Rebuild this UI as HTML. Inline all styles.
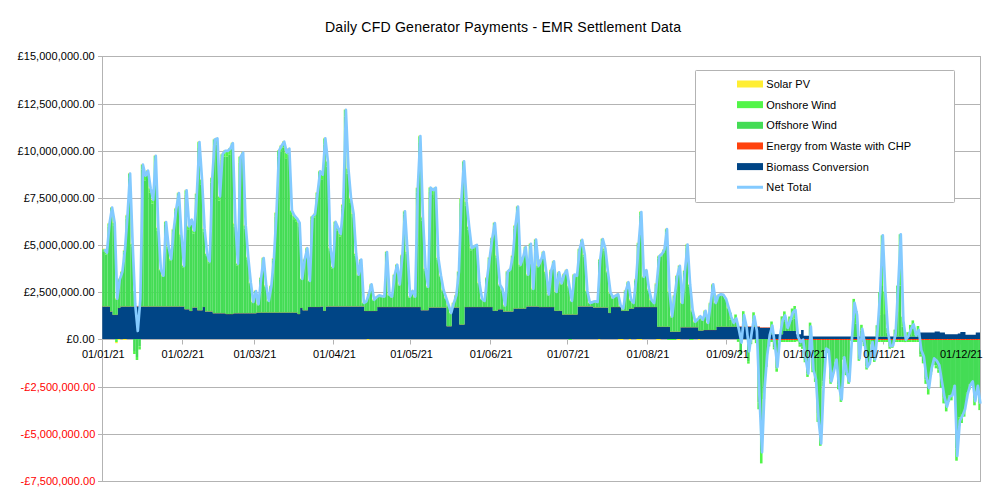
<!DOCTYPE html>
<html><head><meta charset="utf-8"><title>Daily CFD Generator Payments</title>
<style>html,body{margin:0;padding:0;background:#fff;}body{width:1005px;height:497px;overflow:hidden;position:relative;font-family:"Liberation Sans",sans-serif;}</style>
</head><body>
<svg width="1005" height="497" viewBox="0 0 1005 497" style="position:absolute;left:0;top:0">
<rect width="1005" height="497" fill="#fff"/>
<g stroke="#b3b3b3" stroke-width="1" fill="none">
<path d="M98 56.5H980.5"/>
<path d="M98 104.5H980.5"/>
<path d="M98 151.5H980.5"/>
<path d="M98 198.5H980.5"/>
<path d="M98 245.5H980.5"/>
<path d="M98 292.5H980.5"/>
<path d="M98 339.5H980.5"/>
<path d="M98 387.5H980.5"/>
<path d="M98 434.5H980.5"/>
<path d="M98 481.5H980.5"/>
<path d="M102.5 56V482"/>
<path d="M980.5 56V482"/>
</g>
<g stroke="#b3b3b3" stroke-width="1" fill="none">
<path d="M102.3 339.5H105.3"/>
<path d="M102.5 339.0V344.5"/>
<path d="M182.5 339.0V344.5"/>
<path d="M254.5 339.0V344.5"/>
<path d="M333.5 339.0V344.5"/>
<path d="M410.5 339.0V344.5"/>
<path d="M490.5 339.0V344.5"/>
<path d="M567.5 339.0V344.5"/>
<path d="M647.5 339.0V344.5"/>
<path d="M726.5 339.0V344.5"/>
<path d="M803.5 339.0V344.5"/>
<path d="M883.5 339.0V344.5"/>
<path d="M960.5 339.0V344.5"/>
</g>
<clipPath id="pc"><rect x="102" y="50" width="878" height="440"/></clipPath>
<path d="M102.30 339.0V306.50H104.87V306.50H107.44V306.50H110.01V311.40H112.58V314.80H115.14V314.80H117.71V308.00H120.28V306.50H122.85V306.50H125.42V306.50H127.99V306.50H130.56V306.50H133.13V306.50H135.70V306.50H138.27V306.50H140.83V306.50H143.40V306.50H145.97V306.50H148.54V306.50H151.11V306.50H153.68V306.50H156.25V306.50H158.82V306.50H161.39V306.50H163.96V306.50H166.52V306.50H169.09V306.50H171.66V306.50H174.23V306.50H176.80V306.50H179.37V306.50H181.94V306.50H184.51V309.20H187.08V309.20H189.65V311.00H192.22V307.40H194.78V307.40H197.35V310.30H199.92V310.30H202.49V307.00H205.06V311.40H207.63V311.40H210.20V311.40H212.77V313.20H215.34V313.20H217.91V313.20H220.47V313.20H223.04V313.20H225.61V314.10H228.18V314.10H230.75V314.10H233.32V313.20H235.89V313.20H238.46V313.20H241.03V313.20H243.59V313.20H246.16V313.20H248.73V313.20H251.30V313.20H253.87V313.20H256.44V312.60H259.01V312.60H261.58V312.60H264.15V312.60H266.72V312.60H269.29V312.60H271.85V312.60H274.42V312.60H276.99V312.60H279.56V312.60H282.13V312.60H284.70V312.60H287.27V312.60H289.84V312.60H292.41V312.60H294.98V312.60H297.54V314.10H300.11V308.00H302.68V310.30H305.25V310.30H307.82V307.00H310.39V307.00H312.96V307.00H315.53V307.00H318.10V307.00H320.67V306.40H323.23V310.80H325.80V306.40H328.37V306.40H330.94V306.40H333.51V306.40H336.08V306.40H338.65V306.40H341.22V306.40H343.79V306.40H346.36V306.40H348.92V306.40H351.49V306.40H354.06V306.40H356.63V306.40H359.20V306.40H361.77V306.40H364.34V311.00H366.91V311.00H369.48V311.00H372.05V311.00H374.61V311.00H377.18V307.10H379.75V307.10H382.32V307.10H384.89V307.10H387.46V307.10H390.03V307.10H392.60V307.10H395.17V307.10H397.74V307.10H400.30V307.10H402.87V307.10H405.44V307.10H408.01V307.10H410.58V307.10H413.15V307.10H415.72V307.10H418.29V307.10H420.86V310.20H423.43V310.20H425.99V310.20H428.56V307.50H431.13V307.50H433.70V307.50H436.27V307.50H438.84V307.50H441.41V307.50H443.98V307.50H446.55V326.20H449.12V326.20H451.68V307.50H454.25V307.50H456.82V307.50H459.39V324.60H461.96V324.60H464.53V307.10H467.10V307.10H469.67V307.10H472.24V307.10H474.81V307.10H477.37V307.10H479.94V307.10H482.51V307.10H485.08V307.10H487.65V307.10H490.22V307.10H492.79V310.80H495.36V310.80H497.93V309.30H500.50V309.30H503.06V311.50H505.63V311.50H508.20V311.50H510.77V311.50H513.34V308.60H515.91V308.60H518.48V308.60H521.05V308.60H523.62V308.60H526.18V306.40H528.75V306.40H531.32V306.40H533.89V306.40H536.46V306.40H539.03V307.10H541.60V307.10H544.17V307.10H546.74V307.10H549.31V307.10H551.87V307.10H554.44V310.80H557.01V310.80H559.58V310.80H562.15V314.60H564.72V314.60H567.29V314.60H569.86V314.60H572.43V314.60H575.00V314.60H577.56V306.40H580.13V306.40H582.70V306.40H585.27V306.40H587.84V306.40H590.41V306.40H592.98V307.50H595.55V307.50H598.12V307.50H600.69V307.50H603.25V307.50H605.82V307.50H608.39V313.00H610.96V307.10H613.53V307.10H616.10V307.10H618.67V307.10H621.24V310.80H623.81V310.80H626.38V310.80H628.94V308.60H631.51V308.60H634.08V307.10H636.65V307.10H639.22V307.10H641.79V307.10H644.36V307.10H646.93V307.10H649.50V307.10H652.07V307.10H654.63V307.10H657.20V326.80H659.77V326.80H662.34V326.80H664.91V326.80H667.48V326.80H670.05V331.70H672.62V331.70H675.19V331.70H677.76V331.70H680.32V327.30H682.89V327.30H685.46V327.30H688.03V327.30H690.60V327.30H693.17V327.30H695.74V327.30H698.31V330.60H700.88V330.60H703.45V330.00H706.01V330.00H708.58V330.00H711.15V330.00H713.72V330.00H716.29V326.80H718.86V326.80H721.43V326.80H724.00V326.80H726.57V326.80H729.14V326.80H731.70V326.80H734.27V326.80H736.84V326.80H739.41V326.80H741.98V326.80H744.55V326.80H747.12V326.80H749.69V326.80H752.26V326.80H754.83V326.80H757.39V326.80H759.96V327.70H762.53V327.70H765.10V327.70H767.67V327.70H770.24V334.30H772.81V334.30H775.38V334.30H777.95V334.30H780.52V334.30H783.08V331.00H785.65V331.00H788.22V331.00H790.79V331.00H793.36V331.00H795.93V334.30H798.50V334.30H801.07V329.90H803.64V335.80H806.21V335.80H808.77V335.80H811.34V336.60H813.91V336.60H816.48V336.60H819.05V336.60H821.62V336.60H824.19V336.60H826.76V336.60H829.33V336.60H831.90V336.60H834.46V336.60H837.03V336.60H839.60V336.60H842.17V336.60H844.74V336.60H847.31V336.60H849.88V336.60H852.45V336.60H855.02V336.60H857.59V336.60H860.15V336.60H862.72V336.60H865.29V336.60H867.86V336.60H870.43V336.60H873.00V336.60H875.57V336.60H878.14V336.60H880.71V336.60H883.28V336.60H885.84V336.60H888.41V336.60H890.98V336.60H893.55V336.60H896.12V336.60H898.69V336.60H901.26V336.60H903.83V336.60H906.40V336.60H908.97V336.60H911.53V336.60H914.10V336.60H916.67V336.60H919.24V332.50H921.81V332.50H924.38V332.50H926.95V332.50H929.52V332.50H932.09V332.50H934.66V331.40H937.22V331.40H939.79V332.50H942.36V332.50H944.93V334.20H947.50V334.20H950.07V334.20H952.64V334.20H955.21V334.20H957.78V333.60H960.35V331.90H962.91V331.90H965.48V334.80H968.05V334.80H970.62V334.80H973.19V334.80H975.76V332.50H978.33V332.50H980.90V339.0Z" fill="#004586" clip-path="url(#pc)"/>
<path d="M102.30 306.30H104.87M104.87 306.30H107.44M107.44 306.30H110.01M110.01 311.20H112.58M112.58 314.60H115.14M115.14 314.60H117.71M117.71 307.80H120.28M120.28 306.30H122.85M122.85 306.30H125.42M125.42 306.30H127.99M127.99 306.30H130.56M130.56 306.30H133.13M133.13 306.30H135.70M135.70 306.30H138.27M138.27 306.30H140.83M140.83 306.30H143.40M143.40 306.30H145.97M145.97 306.30H148.54M148.54 306.30H151.11M151.11 306.30H153.68M153.68 306.30H156.25M156.25 306.30H158.82M158.82 306.30H161.39M161.39 306.30H163.96M163.96 306.30H166.52M166.52 306.30H169.09M169.09 306.30H171.66M171.66 306.30H174.23M174.23 306.30H176.80M176.80 306.30H179.37M179.37 306.30H181.94M181.94 306.30H184.51M184.51 309.00H187.08M187.08 309.00H189.65M189.65 310.80H192.22M192.21 307.20H194.78M194.78 307.20H197.35M197.35 310.10H199.92M199.92 310.10H202.49M202.49 306.80H205.06M205.06 311.20H207.63M207.63 311.20H210.20M210.20 311.20H212.77M212.77 313.00H215.34M215.34 313.00H217.91M217.91 313.00H220.47M220.47 313.00H223.04M223.04 313.00H225.61M225.61 313.90H228.18M228.18 313.90H230.75M230.75 313.90H233.32M233.32 313.00H235.89M235.89 313.00H238.46M238.46 313.00H241.03M241.03 313.00H243.59M243.59 313.00H246.16M246.16 313.00H248.73M248.73 313.00H251.30M251.30 313.00H253.87M253.87 313.00H256.44M256.44 312.40H259.01M259.01 312.40H261.58M261.58 312.40H264.15M264.15 312.40H266.72M266.72 312.40H269.29M269.28 312.40H271.85M271.85 312.40H274.42M274.42 312.40H276.99M276.99 312.40H279.56M279.56 312.40H282.13M282.13 312.40H284.70M284.70 312.40H287.27M287.27 312.40H289.84M289.84 312.40H292.41M292.41 312.40H294.98M294.97 312.40H297.54M297.54 313.90H300.11M300.11 307.80H302.68M302.68 310.10H305.25M305.25 310.10H307.82M307.82 306.80H310.39M310.39 306.80H312.96M312.96 306.80H315.53M315.53 306.80H318.10M318.10 306.80H320.67M320.67 306.20H323.23M323.23 310.60H325.80M325.80 306.20H328.37M328.37 306.20H330.94M330.94 306.20H333.51M333.51 306.20H336.08M336.08 306.20H338.65M338.65 306.20H341.22M341.22 306.20H343.79M343.79 306.20H346.36M346.36 306.20H348.92M348.92 306.20H351.49M351.49 306.20H354.06M354.06 306.20H356.63M356.63 306.20H359.20M359.20 306.20H361.77M361.77 306.20H364.34M364.34 310.80H366.91M366.91 310.80H369.48M369.48 310.80H372.05M372.05 310.80H374.61M374.61 310.80H377.18M377.18 306.90H379.75M379.75 306.90H382.32M382.32 306.90H384.89M384.89 306.90H387.46M387.46 306.90H390.03M390.03 306.90H392.60M392.60 306.90H395.17M395.17 306.90H397.74M397.74 306.90H400.30M400.30 306.90H402.87M402.87 306.90H405.44M405.44 306.90H408.01M408.01 306.90H410.58M410.58 306.90H413.15M413.15 306.90H415.72M415.72 306.90H418.29M418.29 306.90H420.86M420.86 310.00H423.43M423.43 310.00H425.99M425.99 310.00H428.56M428.56 307.30H431.13M431.13 307.30H433.70M433.70 307.30H436.27M436.27 307.30H438.84M438.84 307.30H441.41M441.41 307.30H443.98M443.98 307.30H446.55M446.55 326.00H449.12M449.12 326.00H451.68M451.68 307.30H454.25M454.25 307.30H456.82M456.82 307.30H459.39M459.39 324.40H461.96M461.96 324.40H464.53M464.53 306.90H467.10M467.10 306.90H469.67M469.67 306.90H472.24M472.24 306.90H474.81M474.81 306.90H477.37M477.37 306.90H479.94M479.94 306.90H482.51M482.51 306.90H485.08M485.08 306.90H487.65M487.65 306.90H490.22M490.22 306.90H492.79M492.79 310.60H495.36M495.36 310.60H497.93M497.93 309.10H500.50M500.50 309.10H503.06M503.06 311.30H505.63M505.63 311.30H508.20M508.20 311.30H510.77M510.77 311.30H513.34M513.34 308.40H515.91M515.91 308.40H518.48M518.48 308.40H521.05M521.05 308.40H523.62M523.62 308.40H526.18M526.18 306.20H528.75M528.75 306.20H531.32M531.32 306.20H533.89M533.89 306.20H536.46M536.46 306.20H539.03M539.03 306.90H541.60M541.60 306.90H544.17M544.17 306.90H546.74M546.74 306.90H549.31M549.31 306.90H551.87M551.88 306.90H554.44M554.44 310.60H557.01M557.01 310.60H559.58M559.58 310.60H562.15M562.15 314.40H564.72M564.72 314.40H567.29M567.29 314.40H569.86M569.86 314.40H572.43M572.43 314.40H575.00M575.00 314.40H577.56M577.56 306.20H580.13M580.13 306.20H582.70M582.70 306.20H585.27M585.27 306.20H587.84M587.84 306.20H590.41M590.41 306.20H592.98M592.98 307.30H595.55M595.55 307.30H598.12M598.12 307.30H600.69M600.69 307.30H603.25M603.25 307.30H605.82M605.82 307.30H608.39M608.39 312.80H610.96M610.96 306.90H613.53M613.53 306.90H616.10M616.10 306.90H618.67M618.67 306.90H621.24M621.24 310.60H623.81M623.81 310.60H626.38M626.38 310.60H628.94M628.94 308.40H631.51M631.51 308.40H634.08M634.08 306.90H636.65M636.65 306.90H639.22M639.22 306.90H641.79M641.79 306.90H644.36M644.36 306.90H646.93M646.93 306.90H649.50M649.50 306.90H652.07M652.07 306.90H654.63M654.63 306.90H657.20M657.20 326.60H659.77M659.77 326.60H662.34M662.34 326.60H664.91M664.91 326.60H667.48M667.48 326.60H670.05M670.05 331.50H672.62M672.62 331.50H675.19M675.19 331.50H677.76M677.76 331.50H680.32M680.32 327.10H682.89M682.89 327.10H685.46M685.46 327.10H688.03M688.03 327.10H690.60M690.60 327.10H693.17M693.17 327.10H695.74M695.74 327.10H698.31M698.31 330.40H700.88M700.88 330.40H703.45M703.45 329.80H706.01M706.01 329.80H708.58M708.58 329.80H711.15M711.15 329.80H713.72M713.72 329.80H716.29M716.29 326.60H718.86M718.86 326.60H721.43M721.43 326.60H724.00M724.00 326.60H726.57M726.57 326.60H729.14M729.14 326.60H731.70M731.70 326.60H734.27M734.27 326.60H736.84M736.84 326.60H739.41M739.41 326.60H741.98M741.98 326.60H744.55M744.55 326.60H747.12M747.12 326.60H749.69M749.69 326.60H752.26M752.26 326.60H754.83M754.83 326.60H757.39M757.39 326.60H759.96M759.96 327.50H762.53M762.53 327.50H765.10M765.10 327.50H767.67M767.67 327.50H770.24" fill="none" stroke="#ff420e" stroke-width="0.6" opacity="0.8"/>
<g clip-path="url(#pc)">
<rect x="102.30" y="251.23" width="2.569" height="55.27" fill="#44dc55"/>
<rect x="102.30" y="249.23" width="2.569" height="2.00" fill="#52f548"/>
<rect x="102.30" y="248.63" width="2.569" height="0.60" fill="#ffee33"/>
<rect x="104.87" y="254.49" width="2.569" height="52.01" fill="#44dc55"/>
<rect x="104.87" y="252.60" width="2.569" height="1.89" fill="#52f548"/>
<rect x="104.87" y="252.00" width="2.569" height="0.60" fill="#ffee33"/>
<rect x="107.44" y="226.44" width="2.569" height="80.06" fill="#44dc55"/>
<rect x="107.44" y="223.54" width="2.569" height="2.90" fill="#52f548"/>
<rect x="107.44" y="222.94" width="2.569" height="0.60" fill="#ffee33"/>
<rect x="110.01" y="211.23" width="2.569" height="100.17" fill="#44dc55"/>
<rect x="110.01" y="207.60" width="2.569" height="3.63" fill="#52f548"/>
<rect x="110.01" y="207.00" width="2.569" height="0.60" fill="#ffee33"/>
<rect x="112.58" y="225.88" width="2.569" height="88.92" fill="#44dc55"/>
<rect x="112.58" y="222.65" width="2.569" height="3.23" fill="#52f548"/>
<rect x="112.58" y="222.05" width="2.569" height="0.60" fill="#ffee33"/>
<rect x="115.14" y="299.70" width="2.569" height="15.10" fill="#44dc55"/>
<rect x="115.14" y="298.70" width="2.569" height="1.00" fill="#52f548"/>
<rect x="115.14" y="298.10" width="2.569" height="0.60" fill="#ffee33"/>
<rect x="117.71" y="280.18" width="2.569" height="27.82" fill="#44dc55"/>
<rect x="117.71" y="279.18" width="2.569" height="1.01" fill="#52f548"/>
<rect x="117.71" y="278.58" width="2.569" height="0.60" fill="#ffee33"/>
<rect x="120.28" y="273.07" width="2.569" height="33.43" fill="#44dc55"/>
<rect x="120.28" y="271.85" width="2.569" height="1.21" fill="#52f548"/>
<rect x="120.28" y="271.25" width="2.569" height="0.60" fill="#ffee33"/>
<rect x="122.85" y="252.67" width="2.569" height="53.83" fill="#44dc55"/>
<rect x="122.85" y="250.72" width="2.569" height="1.95" fill="#52f548"/>
<rect x="122.85" y="250.12" width="2.569" height="0.60" fill="#ffee33"/>
<rect x="125.42" y="218.58" width="2.569" height="87.92" fill="#44dc55"/>
<rect x="125.42" y="215.39" width="2.569" height="3.19" fill="#52f548"/>
<rect x="125.42" y="214.79" width="2.569" height="0.60" fill="#ffee33"/>
<rect x="127.99" y="178.16" width="2.569" height="128.34" fill="#44dc55"/>
<rect x="127.99" y="173.50" width="2.569" height="4.66" fill="#52f548"/>
<rect x="127.99" y="172.90" width="2.569" height="0.60" fill="#ffee33"/>
<rect x="130.56" y="246.19" width="2.569" height="60.31" fill="#44dc55"/>
<rect x="130.56" y="244.00" width="2.569" height="2.19" fill="#52f548"/>
<rect x="130.56" y="243.40" width="2.569" height="0.60" fill="#ffee33"/>
<rect x="133.13" y="292.00" width="2.569" height="14.50" fill="#44dc55"/>
<rect x="133.13" y="291.00" width="2.569" height="1.00" fill="#52f548"/>
<rect x="133.13" y="339.00" width="2.569" height="12.00" fill="#44dc55"/>
<rect x="133.13" y="351.00" width="2.569" height="3.00" fill="#52f548"/>
<rect x="135.70" y="339.00" width="2.569" height="18.00" fill="#44dc55"/>
<rect x="135.70" y="357.00" width="2.569" height="3.00" fill="#52f548"/>
<rect x="138.27" y="339.00" width="2.569" height="7.50" fill="#44dc55"/>
<rect x="138.27" y="346.50" width="2.569" height="3.00" fill="#52f548"/>
<rect x="140.83" y="169.66" width="2.569" height="136.84" fill="#44dc55"/>
<rect x="140.83" y="164.70" width="2.569" height="4.96" fill="#52f548"/>
<rect x="140.83" y="164.10" width="2.569" height="0.60" fill="#ffee33"/>
<rect x="143.40" y="180.28" width="2.569" height="126.22" fill="#44dc55"/>
<rect x="143.40" y="175.70" width="2.569" height="4.58" fill="#52f548"/>
<rect x="143.40" y="175.10" width="2.569" height="0.60" fill="#ffee33"/>
<rect x="145.97" y="175.36" width="2.569" height="131.14" fill="#44dc55"/>
<rect x="145.97" y="170.60" width="2.569" height="4.76" fill="#52f548"/>
<rect x="145.97" y="170.00" width="2.569" height="0.60" fill="#ffee33"/>
<rect x="148.54" y="192.41" width="2.569" height="114.09" fill="#44dc55"/>
<rect x="148.54" y="188.27" width="2.569" height="4.14" fill="#52f548"/>
<rect x="148.54" y="187.67" width="2.569" height="0.60" fill="#ffee33"/>
<rect x="151.11" y="203.53" width="2.569" height="102.97" fill="#44dc55"/>
<rect x="151.11" y="199.80" width="2.569" height="3.73" fill="#52f548"/>
<rect x="151.11" y="199.20" width="2.569" height="0.60" fill="#ffee33"/>
<rect x="153.68" y="161.17" width="2.569" height="145.33" fill="#44dc55"/>
<rect x="153.68" y="155.90" width="2.569" height="5.27" fill="#52f548"/>
<rect x="153.68" y="155.30" width="2.569" height="0.60" fill="#ffee33"/>
<rect x="156.25" y="230.72" width="2.569" height="75.78" fill="#44dc55"/>
<rect x="156.25" y="227.97" width="2.569" height="2.75" fill="#52f548"/>
<rect x="156.25" y="227.37" width="2.569" height="0.60" fill="#ffee33"/>
<rect x="158.82" y="271.01" width="2.569" height="35.49" fill="#44dc55"/>
<rect x="158.82" y="269.72" width="2.569" height="1.29" fill="#52f548"/>
<rect x="158.82" y="269.12" width="2.569" height="0.60" fill="#ffee33"/>
<rect x="161.39" y="276.78" width="2.569" height="29.72" fill="#44dc55"/>
<rect x="161.39" y="275.70" width="2.569" height="1.08" fill="#52f548"/>
<rect x="161.39" y="275.10" width="2.569" height="0.60" fill="#ffee33"/>
<rect x="163.96" y="224.96" width="2.569" height="81.54" fill="#44dc55"/>
<rect x="163.96" y="222.00" width="2.569" height="2.96" fill="#52f548"/>
<rect x="163.96" y="221.40" width="2.569" height="0.60" fill="#ffee33"/>
<rect x="166.52" y="248.96" width="2.569" height="57.54" fill="#44dc55"/>
<rect x="166.52" y="246.87" width="2.569" height="2.09" fill="#52f548"/>
<rect x="166.52" y="246.27" width="2.569" height="0.60" fill="#ffee33"/>
<rect x="169.09" y="260.86" width="2.569" height="45.64" fill="#44dc55"/>
<rect x="169.09" y="259.20" width="2.569" height="1.66" fill="#52f548"/>
<rect x="169.09" y="258.60" width="2.569" height="0.60" fill="#ffee33"/>
<rect x="171.66" y="232.22" width="2.569" height="74.28" fill="#44dc55"/>
<rect x="171.66" y="229.53" width="2.569" height="2.69" fill="#52f548"/>
<rect x="171.66" y="228.93" width="2.569" height="0.60" fill="#ffee33"/>
<rect x="174.23" y="211.89" width="2.569" height="94.61" fill="#44dc55"/>
<rect x="174.23" y="208.46" width="2.569" height="3.43" fill="#52f548"/>
<rect x="174.23" y="207.86" width="2.569" height="0.60" fill="#ffee33"/>
<rect x="176.80" y="197.17" width="2.569" height="109.33" fill="#44dc55"/>
<rect x="176.80" y="193.20" width="2.569" height="3.97" fill="#52f548"/>
<rect x="176.80" y="192.60" width="2.569" height="0.60" fill="#ffee33"/>
<rect x="179.37" y="237.03" width="2.569" height="69.47" fill="#44dc55"/>
<rect x="179.37" y="234.51" width="2.569" height="2.52" fill="#52f548"/>
<rect x="179.37" y="233.91" width="2.569" height="0.60" fill="#ffee33"/>
<rect x="181.94" y="267.22" width="2.569" height="39.28" fill="#44dc55"/>
<rect x="181.94" y="265.80" width="2.569" height="1.42" fill="#52f548"/>
<rect x="181.94" y="265.20" width="2.569" height="0.60" fill="#ffee33"/>
<rect x="184.51" y="194.56" width="2.569" height="114.64" fill="#44dc55"/>
<rect x="184.51" y="190.40" width="2.569" height="4.16" fill="#52f548"/>
<rect x="184.51" y="189.80" width="2.569" height="0.60" fill="#ffee33"/>
<rect x="187.08" y="229.20" width="2.569" height="80.00" fill="#44dc55"/>
<rect x="187.08" y="226.30" width="2.569" height="2.90" fill="#52f548"/>
<rect x="187.08" y="225.70" width="2.569" height="0.60" fill="#ffee33"/>
<rect x="189.65" y="222.90" width="2.569" height="88.10" fill="#44dc55"/>
<rect x="189.65" y="219.70" width="2.569" height="3.20" fill="#52f548"/>
<rect x="189.65" y="219.10" width="2.569" height="0.60" fill="#ffee33"/>
<rect x="192.21" y="233.38" width="2.569" height="74.02" fill="#44dc55"/>
<rect x="192.21" y="230.70" width="2.569" height="2.68" fill="#52f548"/>
<rect x="192.21" y="230.10" width="2.569" height="0.60" fill="#ffee33"/>
<rect x="194.78" y="197.93" width="2.569" height="109.47" fill="#44dc55"/>
<rect x="194.78" y="193.96" width="2.569" height="3.97" fill="#52f548"/>
<rect x="194.78" y="193.36" width="2.569" height="0.60" fill="#ffee33"/>
<rect x="197.35" y="147.99" width="2.569" height="162.31" fill="#44dc55"/>
<rect x="197.35" y="142.10" width="2.569" height="5.89" fill="#52f548"/>
<rect x="197.35" y="141.50" width="2.569" height="0.60" fill="#ffee33"/>
<rect x="199.92" y="184.24" width="2.569" height="126.06" fill="#44dc55"/>
<rect x="199.92" y="179.67" width="2.569" height="4.57" fill="#52f548"/>
<rect x="199.92" y="179.07" width="2.569" height="0.60" fill="#ffee33"/>
<rect x="202.49" y="231.65" width="2.569" height="75.35" fill="#44dc55"/>
<rect x="202.49" y="228.91" width="2.569" height="2.73" fill="#52f548"/>
<rect x="202.49" y="228.31" width="2.569" height="0.60" fill="#ffee33"/>
<rect x="205.06" y="255.99" width="2.569" height="55.41" fill="#44dc55"/>
<rect x="205.06" y="253.98" width="2.569" height="2.01" fill="#52f548"/>
<rect x="205.06" y="253.38" width="2.569" height="0.60" fill="#ffee33"/>
<rect x="207.63" y="263.15" width="2.569" height="48.25" fill="#44dc55"/>
<rect x="207.63" y="261.40" width="2.569" height="1.75" fill="#52f548"/>
<rect x="207.63" y="260.80" width="2.569" height="0.60" fill="#ffee33"/>
<rect x="210.20" y="182.72" width="2.569" height="128.68" fill="#44dc55"/>
<rect x="210.20" y="178.05" width="2.569" height="4.67" fill="#52f548"/>
<rect x="210.20" y="177.45" width="2.569" height="0.60" fill="#ffee33"/>
<rect x="212.77" y="145.54" width="2.569" height="167.66" fill="#44dc55"/>
<rect x="212.77" y="139.46" width="2.569" height="6.08" fill="#52f548"/>
<rect x="212.77" y="138.86" width="2.569" height="0.60" fill="#ffee33"/>
<rect x="215.34" y="144.52" width="2.569" height="168.68" fill="#44dc55"/>
<rect x="215.34" y="138.40" width="2.569" height="6.12" fill="#52f548"/>
<rect x="215.34" y="137.80" width="2.569" height="0.60" fill="#ffee33"/>
<rect x="217.91" y="200.58" width="2.569" height="112.62" fill="#44dc55"/>
<rect x="217.91" y="196.50" width="2.569" height="4.08" fill="#52f548"/>
<rect x="217.91" y="195.90" width="2.569" height="0.60" fill="#ffee33"/>
<rect x="220.47" y="159.83" width="2.569" height="153.37" fill="#44dc55"/>
<rect x="220.47" y="154.27" width="2.569" height="5.56" fill="#52f548"/>
<rect x="220.47" y="153.67" width="2.569" height="0.60" fill="#ffee33"/>
<rect x="223.04" y="156.58" width="2.569" height="156.62" fill="#44dc55"/>
<rect x="223.04" y="150.90" width="2.569" height="5.68" fill="#52f548"/>
<rect x="223.04" y="150.30" width="2.569" height="0.60" fill="#ffee33"/>
<rect x="225.61" y="156.61" width="2.569" height="157.49" fill="#44dc55"/>
<rect x="225.61" y="150.90" width="2.569" height="5.71" fill="#52f548"/>
<rect x="225.61" y="150.30" width="2.569" height="0.60" fill="#ffee33"/>
<rect x="228.18" y="154.32" width="2.569" height="159.78" fill="#44dc55"/>
<rect x="228.18" y="148.52" width="2.569" height="5.80" fill="#52f548"/>
<rect x="228.18" y="147.92" width="2.569" height="0.60" fill="#ffee33"/>
<rect x="230.75" y="149.18" width="2.569" height="164.92" fill="#44dc55"/>
<rect x="230.75" y="143.20" width="2.569" height="5.98" fill="#52f548"/>
<rect x="230.75" y="142.60" width="2.569" height="0.60" fill="#ffee33"/>
<rect x="233.32" y="226.75" width="2.569" height="86.45" fill="#44dc55"/>
<rect x="233.32" y="223.61" width="2.569" height="3.14" fill="#52f548"/>
<rect x="233.32" y="223.01" width="2.569" height="0.60" fill="#ffee33"/>
<rect x="235.89" y="265.34" width="2.569" height="47.86" fill="#44dc55"/>
<rect x="235.89" y="263.60" width="2.569" height="1.74" fill="#52f548"/>
<rect x="235.89" y="263.00" width="2.569" height="0.60" fill="#ffee33"/>
<rect x="238.46" y="162.33" width="2.569" height="150.87" fill="#44dc55"/>
<rect x="238.46" y="156.86" width="2.569" height="5.47" fill="#52f548"/>
<rect x="238.46" y="156.26" width="2.569" height="0.60" fill="#ffee33"/>
<rect x="241.03" y="158.22" width="2.569" height="154.98" fill="#44dc55"/>
<rect x="241.03" y="152.60" width="2.569" height="5.62" fill="#52f548"/>
<rect x="241.03" y="152.00" width="2.569" height="0.60" fill="#ffee33"/>
<rect x="243.59" y="228.48" width="2.569" height="84.72" fill="#44dc55"/>
<rect x="243.59" y="225.41" width="2.569" height="3.07" fill="#52f548"/>
<rect x="243.59" y="224.81" width="2.569" height="0.60" fill="#ffee33"/>
<rect x="246.16" y="259.23" width="2.569" height="53.97" fill="#44dc55"/>
<rect x="246.16" y="257.28" width="2.569" height="1.96" fill="#52f548"/>
<rect x="246.16" y="256.68" width="2.569" height="0.60" fill="#ffee33"/>
<rect x="248.73" y="283.95" width="2.569" height="29.25" fill="#44dc55"/>
<rect x="248.73" y="282.89" width="2.569" height="1.06" fill="#52f548"/>
<rect x="248.73" y="282.29" width="2.569" height="0.60" fill="#ffee33"/>
<rect x="251.30" y="303.00" width="2.569" height="10.20" fill="#44dc55"/>
<rect x="251.30" y="302.00" width="2.569" height="1.00" fill="#52f548"/>
<rect x="251.30" y="301.40" width="2.569" height="0.60" fill="#ffee33"/>
<rect x="253.87" y="292.00" width="2.569" height="21.20" fill="#44dc55"/>
<rect x="253.87" y="291.00" width="2.569" height="1.00" fill="#52f548"/>
<rect x="253.87" y="290.40" width="2.569" height="0.60" fill="#ffee33"/>
<rect x="256.44" y="305.20" width="2.569" height="7.40" fill="#44dc55"/>
<rect x="256.44" y="304.20" width="2.569" height="1.00" fill="#52f548"/>
<rect x="256.44" y="303.60" width="2.569" height="0.60" fill="#ffee33"/>
<rect x="259.01" y="279.32" width="2.569" height="33.28" fill="#44dc55"/>
<rect x="259.01" y="278.12" width="2.569" height="1.21" fill="#52f548"/>
<rect x="259.01" y="277.52" width="2.569" height="0.60" fill="#ffee33"/>
<rect x="261.58" y="260.01" width="2.569" height="52.59" fill="#44dc55"/>
<rect x="261.58" y="258.10" width="2.569" height="1.91" fill="#52f548"/>
<rect x="261.58" y="257.50" width="2.569" height="0.60" fill="#ffee33"/>
<rect x="264.15" y="286.57" width="2.569" height="26.03" fill="#44dc55"/>
<rect x="264.15" y="285.57" width="2.569" height="1.00" fill="#52f548"/>
<rect x="264.15" y="284.97" width="2.569" height="0.60" fill="#ffee33"/>
<rect x="266.72" y="301.90" width="2.569" height="10.70" fill="#44dc55"/>
<rect x="266.72" y="300.90" width="2.569" height="1.00" fill="#52f548"/>
<rect x="266.72" y="300.30" width="2.569" height="0.60" fill="#ffee33"/>
<rect x="269.28" y="287.09" width="2.569" height="25.51" fill="#44dc55"/>
<rect x="269.28" y="286.09" width="2.569" height="1.00" fill="#52f548"/>
<rect x="269.28" y="285.49" width="2.569" height="0.60" fill="#ffee33"/>
<rect x="271.85" y="260.55" width="2.569" height="52.05" fill="#44dc55"/>
<rect x="271.85" y="258.66" width="2.569" height="1.89" fill="#52f548"/>
<rect x="271.85" y="258.06" width="2.569" height="0.60" fill="#ffee33"/>
<rect x="274.42" y="216.39" width="2.569" height="96.21" fill="#44dc55"/>
<rect x="274.42" y="212.90" width="2.569" height="3.49" fill="#52f548"/>
<rect x="274.42" y="212.30" width="2.569" height="0.60" fill="#ffee33"/>
<rect x="276.99" y="156.25" width="2.569" height="156.35" fill="#44dc55"/>
<rect x="276.99" y="150.58" width="2.569" height="5.67" fill="#52f548"/>
<rect x="276.99" y="149.98" width="2.569" height="0.60" fill="#ffee33"/>
<rect x="279.56" y="151.59" width="2.569" height="161.01" fill="#44dc55"/>
<rect x="279.56" y="145.75" width="2.569" height="5.84" fill="#52f548"/>
<rect x="279.56" y="145.15" width="2.569" height="0.60" fill="#ffee33"/>
<rect x="282.13" y="147.68" width="2.569" height="164.92" fill="#44dc55"/>
<rect x="282.13" y="141.70" width="2.569" height="5.98" fill="#52f548"/>
<rect x="282.13" y="141.10" width="2.569" height="0.60" fill="#ffee33"/>
<rect x="284.70" y="158.20" width="2.569" height="154.40" fill="#44dc55"/>
<rect x="284.70" y="152.60" width="2.569" height="5.60" fill="#52f548"/>
<rect x="284.70" y="152.00" width="2.569" height="0.60" fill="#ffee33"/>
<rect x="287.27" y="154.44" width="2.569" height="158.16" fill="#44dc55"/>
<rect x="287.27" y="148.70" width="2.569" height="5.74" fill="#52f548"/>
<rect x="287.27" y="148.10" width="2.569" height="0.60" fill="#ffee33"/>
<rect x="289.84" y="214.10" width="2.569" height="98.50" fill="#44dc55"/>
<rect x="289.84" y="210.53" width="2.569" height="3.57" fill="#52f548"/>
<rect x="289.84" y="209.93" width="2.569" height="0.60" fill="#ffee33"/>
<rect x="292.41" y="219.14" width="2.569" height="93.46" fill="#44dc55"/>
<rect x="292.41" y="215.75" width="2.569" height="3.39" fill="#52f548"/>
<rect x="292.41" y="215.15" width="2.569" height="0.60" fill="#ffee33"/>
<rect x="294.97" y="221.83" width="2.569" height="90.77" fill="#44dc55"/>
<rect x="294.97" y="218.54" width="2.569" height="3.29" fill="#52f548"/>
<rect x="294.97" y="217.94" width="2.569" height="0.60" fill="#ffee33"/>
<rect x="297.54" y="226.15" width="2.569" height="87.95" fill="#44dc55"/>
<rect x="297.54" y="222.96" width="2.569" height="3.19" fill="#52f548"/>
<rect x="297.54" y="222.36" width="2.569" height="0.60" fill="#ffee33"/>
<rect x="300.11" y="280.01" width="2.569" height="27.99" fill="#44dc55"/>
<rect x="300.11" y="279.00" width="2.569" height="1.01" fill="#52f548"/>
<rect x="300.11" y="278.40" width="2.569" height="0.60" fill="#ffee33"/>
<rect x="302.68" y="261.16" width="2.569" height="49.14" fill="#44dc55"/>
<rect x="302.68" y="259.38" width="2.569" height="1.78" fill="#52f548"/>
<rect x="302.68" y="258.78" width="2.569" height="0.60" fill="#ffee33"/>
<rect x="305.25" y="250.37" width="2.569" height="59.93" fill="#44dc55"/>
<rect x="305.25" y="248.20" width="2.569" height="2.17" fill="#52f548"/>
<rect x="305.25" y="247.60" width="2.569" height="0.60" fill="#ffee33"/>
<rect x="307.82" y="282.00" width="2.569" height="25.00" fill="#44dc55"/>
<rect x="307.82" y="281.00" width="2.569" height="1.00" fill="#52f548"/>
<rect x="307.82" y="280.40" width="2.569" height="0.60" fill="#ffee33"/>
<rect x="310.39" y="219.81" width="2.569" height="87.19" fill="#44dc55"/>
<rect x="310.39" y="216.65" width="2.569" height="3.16" fill="#52f548"/>
<rect x="310.39" y="216.05" width="2.569" height="0.60" fill="#ffee33"/>
<rect x="312.96" y="217.39" width="2.569" height="89.61" fill="#44dc55"/>
<rect x="312.96" y="214.14" width="2.569" height="3.25" fill="#52f548"/>
<rect x="312.96" y="213.54" width="2.569" height="0.60" fill="#ffee33"/>
<rect x="315.53" y="196.74" width="2.569" height="110.26" fill="#44dc55"/>
<rect x="315.53" y="192.74" width="2.569" height="4.00" fill="#52f548"/>
<rect x="315.53" y="192.14" width="2.569" height="0.60" fill="#ffee33"/>
<rect x="318.10" y="176.05" width="2.569" height="130.95" fill="#44dc55"/>
<rect x="318.10" y="171.30" width="2.569" height="4.75" fill="#52f548"/>
<rect x="318.10" y="170.70" width="2.569" height="0.60" fill="#ffee33"/>
<rect x="320.67" y="179.21" width="2.569" height="127.19" fill="#44dc55"/>
<rect x="320.67" y="174.60" width="2.569" height="4.61" fill="#52f548"/>
<rect x="320.67" y="174.00" width="2.569" height="0.60" fill="#ffee33"/>
<rect x="323.23" y="144.43" width="2.569" height="166.37" fill="#44dc55"/>
<rect x="323.23" y="138.40" width="2.569" height="6.03" fill="#52f548"/>
<rect x="323.23" y="137.80" width="2.569" height="0.60" fill="#ffee33"/>
<rect x="325.80" y="166.46" width="2.569" height="139.94" fill="#44dc55"/>
<rect x="325.80" y="161.39" width="2.569" height="5.08" fill="#52f548"/>
<rect x="325.80" y="160.79" width="2.569" height="0.60" fill="#ffee33"/>
<rect x="328.37" y="250.22" width="2.569" height="56.18" fill="#44dc55"/>
<rect x="328.37" y="248.18" width="2.569" height="2.04" fill="#52f548"/>
<rect x="328.37" y="247.58" width="2.569" height="0.60" fill="#ffee33"/>
<rect x="330.94" y="268.28" width="2.569" height="38.12" fill="#44dc55"/>
<rect x="330.94" y="266.90" width="2.569" height="1.38" fill="#52f548"/>
<rect x="330.94" y="266.30" width="2.569" height="0.60" fill="#ffee33"/>
<rect x="333.51" y="224.86" width="2.569" height="81.54" fill="#44dc55"/>
<rect x="333.51" y="221.90" width="2.569" height="2.96" fill="#52f548"/>
<rect x="333.51" y="221.30" width="2.569" height="0.60" fill="#ffee33"/>
<rect x="336.08" y="230.80" width="2.569" height="75.60" fill="#44dc55"/>
<rect x="336.08" y="228.06" width="2.569" height="2.74" fill="#52f548"/>
<rect x="336.08" y="227.46" width="2.569" height="0.60" fill="#ffee33"/>
<rect x="338.65" y="236.53" width="2.569" height="69.87" fill="#44dc55"/>
<rect x="338.65" y="234.00" width="2.569" height="2.53" fill="#52f548"/>
<rect x="338.65" y="233.40" width="2.569" height="0.60" fill="#ffee33"/>
<rect x="341.22" y="208.34" width="2.569" height="98.06" fill="#44dc55"/>
<rect x="341.22" y="204.78" width="2.569" height="3.56" fill="#52f548"/>
<rect x="341.22" y="204.18" width="2.569" height="0.60" fill="#ffee33"/>
<rect x="343.79" y="116.78" width="2.569" height="189.62" fill="#44dc55"/>
<rect x="343.79" y="109.90" width="2.569" height="6.88" fill="#52f548"/>
<rect x="343.79" y="109.30" width="2.569" height="0.60" fill="#ffee33"/>
<rect x="346.36" y="173.57" width="2.569" height="132.83" fill="#44dc55"/>
<rect x="346.36" y="168.75" width="2.569" height="4.82" fill="#52f548"/>
<rect x="346.36" y="168.15" width="2.569" height="0.60" fill="#ffee33"/>
<rect x="348.92" y="202.16" width="2.569" height="104.24" fill="#44dc55"/>
<rect x="348.92" y="198.38" width="2.569" height="3.78" fill="#52f548"/>
<rect x="348.92" y="197.78" width="2.569" height="0.60" fill="#ffee33"/>
<rect x="351.49" y="217.07" width="2.569" height="89.33" fill="#44dc55"/>
<rect x="351.49" y="213.83" width="2.569" height="3.24" fill="#52f548"/>
<rect x="351.49" y="213.23" width="2.569" height="0.60" fill="#ffee33"/>
<rect x="354.06" y="255.83" width="2.569" height="50.57" fill="#44dc55"/>
<rect x="354.06" y="254.00" width="2.569" height="1.83" fill="#52f548"/>
<rect x="354.06" y="253.40" width="2.569" height="0.60" fill="#ffee33"/>
<rect x="356.63" y="275.71" width="2.569" height="30.69" fill="#44dc55"/>
<rect x="356.63" y="274.60" width="2.569" height="1.11" fill="#52f548"/>
<rect x="356.63" y="274.00" width="2.569" height="0.60" fill="#ffee33"/>
<rect x="359.20" y="261.24" width="2.569" height="45.16" fill="#44dc55"/>
<rect x="359.20" y="259.60" width="2.569" height="1.64" fill="#52f548"/>
<rect x="359.20" y="259.00" width="2.569" height="0.60" fill="#ffee33"/>
<rect x="361.77" y="304.00" width="2.569" height="2.40" fill="#44dc55"/>
<rect x="361.77" y="303.00" width="2.569" height="1.00" fill="#52f548"/>
<rect x="361.77" y="302.40" width="2.569" height="0.60" fill="#ffee33"/>
<rect x="364.34" y="302.37" width="2.569" height="8.63" fill="#44dc55"/>
<rect x="364.34" y="301.37" width="2.569" height="1.00" fill="#52f548"/>
<rect x="364.34" y="300.77" width="2.569" height="0.60" fill="#ffee33"/>
<rect x="366.91" y="294.88" width="2.569" height="16.12" fill="#44dc55"/>
<rect x="366.91" y="293.88" width="2.569" height="1.00" fill="#52f548"/>
<rect x="366.91" y="293.28" width="2.569" height="0.60" fill="#ffee33"/>
<rect x="369.48" y="285.40" width="2.569" height="25.60" fill="#44dc55"/>
<rect x="369.48" y="284.40" width="2.569" height="1.00" fill="#52f548"/>
<rect x="369.48" y="283.80" width="2.569" height="0.60" fill="#ffee33"/>
<rect x="372.05" y="300.80" width="2.569" height="10.20" fill="#44dc55"/>
<rect x="372.05" y="299.80" width="2.569" height="1.00" fill="#52f548"/>
<rect x="372.05" y="299.20" width="2.569" height="0.60" fill="#ffee33"/>
<rect x="374.61" y="298.08" width="2.569" height="12.92" fill="#44dc55"/>
<rect x="374.61" y="297.08" width="2.569" height="1.00" fill="#52f548"/>
<rect x="374.61" y="296.48" width="2.569" height="0.60" fill="#ffee33"/>
<rect x="377.18" y="296.40" width="2.569" height="10.70" fill="#44dc55"/>
<rect x="377.18" y="295.40" width="2.569" height="1.00" fill="#52f548"/>
<rect x="377.18" y="294.80" width="2.569" height="0.60" fill="#ffee33"/>
<rect x="379.75" y="297.10" width="2.569" height="10.00" fill="#44dc55"/>
<rect x="379.75" y="296.10" width="2.569" height="1.00" fill="#52f548"/>
<rect x="379.75" y="295.50" width="2.569" height="0.60" fill="#ffee33"/>
<rect x="382.32" y="297.50" width="2.569" height="9.60" fill="#44dc55"/>
<rect x="382.32" y="296.50" width="2.569" height="1.00" fill="#52f548"/>
<rect x="382.32" y="295.90" width="2.569" height="0.60" fill="#ffee33"/>
<rect x="384.89" y="253.93" width="2.569" height="53.17" fill="#44dc55"/>
<rect x="384.89" y="252.00" width="2.569" height="1.93" fill="#52f548"/>
<rect x="384.89" y="251.40" width="2.569" height="0.60" fill="#ffee33"/>
<rect x="387.46" y="295.82" width="2.569" height="11.28" fill="#44dc55"/>
<rect x="387.46" y="294.82" width="2.569" height="1.00" fill="#52f548"/>
<rect x="387.46" y="294.22" width="2.569" height="0.60" fill="#ffee33"/>
<rect x="390.03" y="297.50" width="2.569" height="9.60" fill="#44dc55"/>
<rect x="390.03" y="296.50" width="2.569" height="1.00" fill="#52f548"/>
<rect x="390.03" y="295.90" width="2.569" height="0.60" fill="#ffee33"/>
<rect x="392.60" y="276.12" width="2.569" height="30.98" fill="#44dc55"/>
<rect x="392.60" y="274.99" width="2.569" height="1.12" fill="#52f548"/>
<rect x="392.60" y="274.39" width="2.569" height="0.60" fill="#ffee33"/>
<rect x="395.17" y="266.18" width="2.569" height="40.92" fill="#44dc55"/>
<rect x="395.17" y="264.70" width="2.569" height="1.48" fill="#52f548"/>
<rect x="395.17" y="264.10" width="2.569" height="0.60" fill="#ffee33"/>
<rect x="397.74" y="285.40" width="2.569" height="21.70" fill="#44dc55"/>
<rect x="397.74" y="284.40" width="2.569" height="1.00" fill="#52f548"/>
<rect x="397.74" y="283.80" width="2.569" height="0.60" fill="#ffee33"/>
<rect x="400.30" y="257.04" width="2.569" height="50.06" fill="#44dc55"/>
<rect x="400.30" y="255.22" width="2.569" height="1.82" fill="#52f548"/>
<rect x="400.30" y="254.62" width="2.569" height="0.60" fill="#ffee33"/>
<rect x="402.87" y="214.75" width="2.569" height="92.35" fill="#44dc55"/>
<rect x="402.87" y="211.40" width="2.569" height="3.35" fill="#52f548"/>
<rect x="402.87" y="210.80" width="2.569" height="0.60" fill="#ffee33"/>
<rect x="405.44" y="253.84" width="2.569" height="53.26" fill="#44dc55"/>
<rect x="405.44" y="251.91" width="2.569" height="1.93" fill="#52f548"/>
<rect x="405.44" y="251.31" width="2.569" height="0.60" fill="#ffee33"/>
<rect x="408.01" y="297.50" width="2.569" height="9.60" fill="#44dc55"/>
<rect x="408.01" y="296.50" width="2.569" height="1.00" fill="#52f548"/>
<rect x="408.01" y="295.90" width="2.569" height="0.60" fill="#ffee33"/>
<rect x="410.58" y="292.00" width="2.569" height="15.10" fill="#44dc55"/>
<rect x="410.58" y="291.00" width="2.569" height="1.00" fill="#52f548"/>
<rect x="410.58" y="290.40" width="2.569" height="0.60" fill="#ffee33"/>
<rect x="413.15" y="297.50" width="2.569" height="9.60" fill="#44dc55"/>
<rect x="413.15" y="296.50" width="2.569" height="1.00" fill="#52f548"/>
<rect x="413.15" y="295.90" width="2.569" height="0.60" fill="#ffee33"/>
<rect x="415.72" y="192.24" width="2.569" height="114.86" fill="#44dc55"/>
<rect x="415.72" y="188.07" width="2.569" height="4.17" fill="#52f548"/>
<rect x="415.72" y="187.47" width="2.569" height="0.60" fill="#ffee33"/>
<rect x="418.29" y="142.18" width="2.569" height="164.92" fill="#44dc55"/>
<rect x="418.29" y="136.20" width="2.569" height="5.98" fill="#52f548"/>
<rect x="418.29" y="135.60" width="2.569" height="0.60" fill="#ffee33"/>
<rect x="420.86" y="220.58" width="2.569" height="89.62" fill="#44dc55"/>
<rect x="420.86" y="217.33" width="2.569" height="3.25" fill="#52f548"/>
<rect x="420.86" y="216.73" width="2.569" height="0.60" fill="#ffee33"/>
<rect x="423.43" y="270.20" width="2.569" height="40.00" fill="#44dc55"/>
<rect x="423.43" y="268.75" width="2.569" height="1.45" fill="#52f548"/>
<rect x="423.43" y="268.15" width="2.569" height="0.60" fill="#ffee33"/>
<rect x="425.99" y="287.60" width="2.569" height="22.60" fill="#44dc55"/>
<rect x="425.99" y="286.60" width="2.569" height="1.00" fill="#52f548"/>
<rect x="425.99" y="286.00" width="2.569" height="0.60" fill="#ffee33"/>
<rect x="428.56" y="191.89" width="2.569" height="115.61" fill="#44dc55"/>
<rect x="428.56" y="187.70" width="2.569" height="4.19" fill="#52f548"/>
<rect x="428.56" y="187.10" width="2.569" height="0.60" fill="#ffee33"/>
<rect x="431.13" y="194.11" width="2.569" height="113.39" fill="#44dc55"/>
<rect x="431.13" y="190.00" width="2.569" height="4.11" fill="#52f548"/>
<rect x="431.13" y="189.40" width="2.569" height="0.60" fill="#ffee33"/>
<rect x="433.70" y="191.89" width="2.569" height="115.61" fill="#44dc55"/>
<rect x="433.70" y="187.70" width="2.569" height="4.19" fill="#52f548"/>
<rect x="433.70" y="187.10" width="2.569" height="0.60" fill="#ffee33"/>
<rect x="436.27" y="259.80" width="2.569" height="47.70" fill="#44dc55"/>
<rect x="436.27" y="258.07" width="2.569" height="1.73" fill="#52f548"/>
<rect x="436.27" y="257.47" width="2.569" height="0.60" fill="#ffee33"/>
<rect x="438.84" y="276.66" width="2.569" height="30.84" fill="#44dc55"/>
<rect x="438.84" y="275.55" width="2.569" height="1.12" fill="#52f548"/>
<rect x="438.84" y="274.95" width="2.569" height="0.60" fill="#ffee33"/>
<rect x="441.41" y="290.78" width="2.569" height="16.72" fill="#44dc55"/>
<rect x="441.41" y="289.78" width="2.569" height="1.00" fill="#52f548"/>
<rect x="441.41" y="289.18" width="2.569" height="0.60" fill="#ffee33"/>
<rect x="443.98" y="298.48" width="2.569" height="9.02" fill="#44dc55"/>
<rect x="443.98" y="297.48" width="2.569" height="1.00" fill="#52f548"/>
<rect x="443.98" y="296.88" width="2.569" height="0.60" fill="#ffee33"/>
<rect x="446.55" y="306.19" width="2.569" height="20.01" fill="#44dc55"/>
<rect x="446.55" y="305.19" width="2.569" height="1.00" fill="#52f548"/>
<rect x="446.55" y="304.59" width="2.569" height="0.60" fill="#ffee33"/>
<rect x="449.12" y="314.00" width="2.569" height="12.20" fill="#44dc55"/>
<rect x="449.12" y="313.00" width="2.569" height="1.00" fill="#52f548"/>
<rect x="449.12" y="312.40" width="2.569" height="0.60" fill="#ffee33"/>
<rect x="451.68" y="304.25" width="2.569" height="3.25" fill="#44dc55"/>
<rect x="451.68" y="303.25" width="2.569" height="1.00" fill="#52f548"/>
<rect x="451.68" y="302.65" width="2.569" height="0.60" fill="#ffee33"/>
<rect x="454.25" y="296.40" width="2.569" height="11.10" fill="#44dc55"/>
<rect x="454.25" y="295.40" width="2.569" height="1.00" fill="#52f548"/>
<rect x="454.25" y="294.80" width="2.569" height="0.60" fill="#ffee33"/>
<rect x="456.82" y="273.05" width="2.569" height="34.45" fill="#44dc55"/>
<rect x="456.82" y="271.80" width="2.569" height="1.25" fill="#52f548"/>
<rect x="456.82" y="271.20" width="2.569" height="0.60" fill="#ffee33"/>
<rect x="459.39" y="203.07" width="2.569" height="121.53" fill="#44dc55"/>
<rect x="459.39" y="198.66" width="2.569" height="4.41" fill="#52f548"/>
<rect x="459.39" y="198.06" width="2.569" height="0.60" fill="#ffee33"/>
<rect x="461.96" y="167.11" width="2.569" height="157.49" fill="#44dc55"/>
<rect x="461.96" y="161.40" width="2.569" height="5.71" fill="#52f548"/>
<rect x="461.96" y="160.80" width="2.569" height="0.60" fill="#ffee33"/>
<rect x="464.53" y="205.36" width="2.569" height="101.74" fill="#44dc55"/>
<rect x="464.53" y="201.67" width="2.569" height="3.69" fill="#52f548"/>
<rect x="464.53" y="201.07" width="2.569" height="0.60" fill="#ffee33"/>
<rect x="467.10" y="229.62" width="2.569" height="77.48" fill="#44dc55"/>
<rect x="467.10" y="226.81" width="2.569" height="2.81" fill="#52f548"/>
<rect x="467.10" y="226.21" width="2.569" height="0.60" fill="#ffee33"/>
<rect x="469.67" y="250.26" width="2.569" height="56.84" fill="#44dc55"/>
<rect x="469.67" y="248.20" width="2.569" height="2.06" fill="#52f548"/>
<rect x="469.67" y="247.60" width="2.569" height="0.60" fill="#ffee33"/>
<rect x="472.24" y="248.32" width="2.569" height="58.78" fill="#44dc55"/>
<rect x="472.24" y="246.19" width="2.569" height="2.13" fill="#52f548"/>
<rect x="472.24" y="245.59" width="2.569" height="0.60" fill="#ffee33"/>
<rect x="474.81" y="247.17" width="2.569" height="59.93" fill="#44dc55"/>
<rect x="474.81" y="245.00" width="2.569" height="2.17" fill="#52f548"/>
<rect x="474.81" y="244.40" width="2.569" height="0.60" fill="#ffee33"/>
<rect x="477.37" y="284.06" width="2.569" height="23.04" fill="#44dc55"/>
<rect x="477.37" y="283.06" width="2.569" height="1.00" fill="#52f548"/>
<rect x="477.37" y="282.46" width="2.569" height="0.60" fill="#ffee33"/>
<rect x="479.94" y="300.02" width="2.569" height="7.08" fill="#44dc55"/>
<rect x="479.94" y="299.02" width="2.569" height="1.00" fill="#52f548"/>
<rect x="479.94" y="298.42" width="2.569" height="0.60" fill="#ffee33"/>
<rect x="482.51" y="301.90" width="2.569" height="5.20" fill="#44dc55"/>
<rect x="482.51" y="300.90" width="2.569" height="1.00" fill="#52f548"/>
<rect x="482.51" y="300.30" width="2.569" height="0.60" fill="#ffee33"/>
<rect x="485.08" y="278.90" width="2.569" height="28.20" fill="#44dc55"/>
<rect x="485.08" y="277.88" width="2.569" height="1.02" fill="#52f548"/>
<rect x="485.08" y="277.28" width="2.569" height="0.60" fill="#ffee33"/>
<rect x="487.65" y="259.43" width="2.569" height="47.67" fill="#44dc55"/>
<rect x="487.65" y="257.70" width="2.569" height="1.73" fill="#52f548"/>
<rect x="487.65" y="257.10" width="2.569" height="0.60" fill="#ffee33"/>
<rect x="490.22" y="240.59" width="2.569" height="66.51" fill="#44dc55"/>
<rect x="490.22" y="238.17" width="2.569" height="2.41" fill="#52f548"/>
<rect x="490.22" y="237.57" width="2.569" height="0.60" fill="#ffee33"/>
<rect x="492.79" y="226.07" width="2.569" height="84.73" fill="#44dc55"/>
<rect x="492.79" y="223.00" width="2.569" height="3.07" fill="#52f548"/>
<rect x="492.79" y="222.40" width="2.569" height="0.60" fill="#ffee33"/>
<rect x="495.36" y="257.39" width="2.569" height="53.41" fill="#44dc55"/>
<rect x="495.36" y="255.45" width="2.569" height="1.94" fill="#52f548"/>
<rect x="495.36" y="254.85" width="2.569" height="0.60" fill="#ffee33"/>
<rect x="497.93" y="285.74" width="2.569" height="23.56" fill="#44dc55"/>
<rect x="497.93" y="284.74" width="2.569" height="1.00" fill="#52f548"/>
<rect x="497.93" y="284.14" width="2.569" height="0.60" fill="#ffee33"/>
<rect x="500.50" y="290.27" width="2.569" height="19.03" fill="#44dc55"/>
<rect x="500.50" y="289.27" width="2.569" height="1.00" fill="#52f548"/>
<rect x="500.50" y="288.67" width="2.569" height="0.60" fill="#ffee33"/>
<rect x="503.06" y="306.30" width="2.569" height="5.20" fill="#44dc55"/>
<rect x="503.06" y="305.30" width="2.569" height="1.00" fill="#52f548"/>
<rect x="503.06" y="304.70" width="2.569" height="0.60" fill="#ffee33"/>
<rect x="505.63" y="273.00" width="2.569" height="38.50" fill="#44dc55"/>
<rect x="505.63" y="271.61" width="2.569" height="1.40" fill="#52f548"/>
<rect x="505.63" y="271.01" width="2.569" height="0.60" fill="#ffee33"/>
<rect x="508.20" y="270.87" width="2.569" height="40.63" fill="#44dc55"/>
<rect x="508.20" y="269.39" width="2.569" height="1.47" fill="#52f548"/>
<rect x="508.20" y="268.79" width="2.569" height="0.60" fill="#ffee33"/>
<rect x="510.77" y="257.96" width="2.569" height="53.54" fill="#44dc55"/>
<rect x="510.77" y="256.02" width="2.569" height="1.94" fill="#52f548"/>
<rect x="510.77" y="255.42" width="2.569" height="0.60" fill="#ffee33"/>
<rect x="513.34" y="228.71" width="2.569" height="79.89" fill="#44dc55"/>
<rect x="513.34" y="225.82" width="2.569" height="2.90" fill="#52f548"/>
<rect x="513.34" y="225.22" width="2.569" height="0.60" fill="#ffee33"/>
<rect x="515.91" y="210.07" width="2.569" height="98.53" fill="#44dc55"/>
<rect x="515.91" y="206.50" width="2.569" height="3.57" fill="#52f548"/>
<rect x="515.91" y="205.90" width="2.569" height="0.60" fill="#ffee33"/>
<rect x="518.48" y="266.24" width="2.569" height="42.36" fill="#44dc55"/>
<rect x="518.48" y="264.70" width="2.569" height="1.54" fill="#52f548"/>
<rect x="518.48" y="264.10" width="2.569" height="0.60" fill="#ffee33"/>
<rect x="521.05" y="259.17" width="2.569" height="49.43" fill="#44dc55"/>
<rect x="521.05" y="257.38" width="2.569" height="1.79" fill="#52f548"/>
<rect x="521.05" y="256.78" width="2.569" height="0.60" fill="#ffee33"/>
<rect x="523.62" y="249.25" width="2.569" height="59.35" fill="#44dc55"/>
<rect x="523.62" y="247.10" width="2.569" height="2.15" fill="#52f548"/>
<rect x="523.62" y="246.50" width="2.569" height="0.60" fill="#ffee33"/>
<rect x="526.18" y="275.71" width="2.569" height="30.69" fill="#44dc55"/>
<rect x="526.18" y="274.60" width="2.569" height="1.11" fill="#52f548"/>
<rect x="526.18" y="274.00" width="2.569" height="0.60" fill="#ffee33"/>
<rect x="528.75" y="246.09" width="2.569" height="60.31" fill="#44dc55"/>
<rect x="528.75" y="243.90" width="2.569" height="2.19" fill="#52f548"/>
<rect x="528.75" y="243.30" width="2.569" height="0.60" fill="#ffee33"/>
<rect x="531.32" y="289.80" width="2.569" height="16.60" fill="#44dc55"/>
<rect x="531.32" y="288.80" width="2.569" height="1.00" fill="#52f548"/>
<rect x="531.32" y="288.20" width="2.569" height="0.60" fill="#ffee33"/>
<rect x="533.89" y="241.84" width="2.569" height="64.56" fill="#44dc55"/>
<rect x="533.89" y="239.50" width="2.569" height="2.34" fill="#52f548"/>
<rect x="533.89" y="238.90" width="2.569" height="0.60" fill="#ffee33"/>
<rect x="536.46" y="267.22" width="2.569" height="39.18" fill="#44dc55"/>
<rect x="536.46" y="265.80" width="2.569" height="1.42" fill="#52f548"/>
<rect x="536.46" y="265.20" width="2.569" height="0.60" fill="#ffee33"/>
<rect x="539.03" y="261.54" width="2.569" height="45.56" fill="#44dc55"/>
<rect x="539.03" y="259.88" width="2.569" height="1.65" fill="#52f548"/>
<rect x="539.03" y="259.28" width="2.569" height="0.60" fill="#ffee33"/>
<rect x="541.60" y="253.93" width="2.569" height="53.17" fill="#44dc55"/>
<rect x="541.60" y="252.00" width="2.569" height="1.93" fill="#52f548"/>
<rect x="541.60" y="251.40" width="2.569" height="0.60" fill="#ffee33"/>
<rect x="544.17" y="273.08" width="2.569" height="34.02" fill="#44dc55"/>
<rect x="544.17" y="271.85" width="2.569" height="1.23" fill="#52f548"/>
<rect x="544.17" y="271.25" width="2.569" height="0.60" fill="#ffee33"/>
<rect x="546.74" y="295.30" width="2.569" height="11.80" fill="#44dc55"/>
<rect x="546.74" y="294.30" width="2.569" height="1.00" fill="#52f548"/>
<rect x="546.74" y="293.70" width="2.569" height="0.60" fill="#ffee33"/>
<rect x="549.31" y="271.54" width="2.569" height="35.56" fill="#44dc55"/>
<rect x="549.31" y="270.25" width="2.569" height="1.29" fill="#52f548"/>
<rect x="549.31" y="269.65" width="2.569" height="0.60" fill="#ffee33"/>
<rect x="551.88" y="263.00" width="2.569" height="44.10" fill="#44dc55"/>
<rect x="551.88" y="261.40" width="2.569" height="1.60" fill="#52f548"/>
<rect x="551.88" y="260.80" width="2.569" height="0.60" fill="#ffee33"/>
<rect x="554.44" y="293.00" width="2.569" height="17.80" fill="#44dc55"/>
<rect x="554.44" y="292.00" width="2.569" height="1.00" fill="#52f548"/>
<rect x="554.44" y="291.40" width="2.569" height="0.60" fill="#ffee33"/>
<rect x="557.01" y="273.74" width="2.569" height="37.06" fill="#44dc55"/>
<rect x="557.01" y="272.40" width="2.569" height="1.34" fill="#52f548"/>
<rect x="557.01" y="271.80" width="2.569" height="0.60" fill="#ffee33"/>
<rect x="559.58" y="284.30" width="2.569" height="26.50" fill="#44dc55"/>
<rect x="559.58" y="283.30" width="2.569" height="1.00" fill="#52f548"/>
<rect x="559.58" y="282.70" width="2.569" height="0.60" fill="#ffee33"/>
<rect x="562.15" y="275.74" width="2.569" height="38.86" fill="#44dc55"/>
<rect x="562.15" y="274.33" width="2.569" height="1.41" fill="#52f548"/>
<rect x="562.15" y="273.73" width="2.569" height="0.60" fill="#ffee33"/>
<rect x="564.72" y="271.75" width="2.569" height="42.85" fill="#44dc55"/>
<rect x="564.72" y="270.20" width="2.569" height="1.55" fill="#52f548"/>
<rect x="564.72" y="269.60" width="2.569" height="0.60" fill="#ffee33"/>
<rect x="567.29" y="287.17" width="2.569" height="27.43" fill="#44dc55"/>
<rect x="567.29" y="286.17" width="2.569" height="1.00" fill="#52f548"/>
<rect x="567.29" y="285.57" width="2.569" height="0.60" fill="#ffee33"/>
<rect x="569.86" y="301.90" width="2.569" height="12.70" fill="#44dc55"/>
<rect x="569.86" y="300.90" width="2.569" height="1.00" fill="#52f548"/>
<rect x="569.86" y="300.30" width="2.569" height="0.60" fill="#ffee33"/>
<rect x="572.43" y="276.00" width="2.569" height="38.60" fill="#44dc55"/>
<rect x="572.43" y="274.60" width="2.569" height="1.40" fill="#52f548"/>
<rect x="572.43" y="274.00" width="2.569" height="0.60" fill="#ffee33"/>
<rect x="575.00" y="277.06" width="2.569" height="37.54" fill="#44dc55"/>
<rect x="575.00" y="275.70" width="2.569" height="1.36" fill="#52f548"/>
<rect x="575.00" y="275.10" width="2.569" height="0.60" fill="#ffee33"/>
<rect x="577.56" y="251.16" width="2.569" height="55.24" fill="#44dc55"/>
<rect x="577.56" y="249.16" width="2.569" height="2.00" fill="#52f548"/>
<rect x="577.56" y="248.56" width="2.569" height="0.60" fill="#ffee33"/>
<rect x="580.13" y="242.23" width="2.569" height="64.17" fill="#44dc55"/>
<rect x="580.13" y="239.90" width="2.569" height="2.33" fill="#52f548"/>
<rect x="580.13" y="239.30" width="2.569" height="0.60" fill="#ffee33"/>
<rect x="582.70" y="256.57" width="2.569" height="49.83" fill="#44dc55"/>
<rect x="582.70" y="254.77" width="2.569" height="1.81" fill="#52f548"/>
<rect x="582.70" y="254.17" width="2.569" height="0.60" fill="#ffee33"/>
<rect x="585.27" y="291.92" width="2.569" height="14.48" fill="#44dc55"/>
<rect x="585.27" y="290.92" width="2.569" height="1.00" fill="#52f548"/>
<rect x="585.27" y="290.32" width="2.569" height="0.60" fill="#ffee33"/>
<rect x="587.84" y="304.00" width="2.569" height="2.40" fill="#44dc55"/>
<rect x="587.84" y="303.00" width="2.569" height="1.00" fill="#52f548"/>
<rect x="587.84" y="302.40" width="2.569" height="0.60" fill="#ffee33"/>
<rect x="590.41" y="303.11" width="2.569" height="3.29" fill="#44dc55"/>
<rect x="590.41" y="302.11" width="2.569" height="1.00" fill="#52f548"/>
<rect x="590.41" y="301.51" width="2.569" height="0.60" fill="#ffee33"/>
<rect x="592.98" y="302.30" width="2.569" height="5.20" fill="#44dc55"/>
<rect x="592.98" y="301.30" width="2.569" height="1.00" fill="#52f548"/>
<rect x="592.98" y="300.70" width="2.569" height="0.60" fill="#ffee33"/>
<rect x="595.55" y="303.00" width="2.569" height="4.50" fill="#44dc55"/>
<rect x="595.55" y="302.00" width="2.569" height="1.00" fill="#52f548"/>
<rect x="595.55" y="301.40" width="2.569" height="0.60" fill="#ffee33"/>
<rect x="598.12" y="261.21" width="2.569" height="46.29" fill="#44dc55"/>
<rect x="598.12" y="259.53" width="2.569" height="1.68" fill="#52f548"/>
<rect x="598.12" y="258.93" width="2.569" height="0.60" fill="#ffee33"/>
<rect x="600.69" y="241.40" width="2.569" height="66.10" fill="#44dc55"/>
<rect x="600.69" y="239.00" width="2.569" height="2.40" fill="#52f548"/>
<rect x="600.69" y="238.40" width="2.569" height="0.60" fill="#ffee33"/>
<rect x="603.25" y="250.60" width="2.569" height="56.90" fill="#44dc55"/>
<rect x="603.25" y="248.54" width="2.569" height="2.06" fill="#52f548"/>
<rect x="603.25" y="247.94" width="2.569" height="0.60" fill="#ffee33"/>
<rect x="605.82" y="272.84" width="2.569" height="34.66" fill="#44dc55"/>
<rect x="605.82" y="271.58" width="2.569" height="1.26" fill="#52f548"/>
<rect x="605.82" y="270.98" width="2.569" height="0.60" fill="#ffee33"/>
<rect x="608.39" y="293.47" width="2.569" height="19.53" fill="#44dc55"/>
<rect x="608.39" y="292.47" width="2.569" height="1.00" fill="#52f548"/>
<rect x="608.39" y="291.87" width="2.569" height="0.60" fill="#ffee33"/>
<rect x="610.96" y="298.60" width="2.569" height="8.50" fill="#44dc55"/>
<rect x="610.96" y="297.60" width="2.569" height="1.00" fill="#52f548"/>
<rect x="610.96" y="297.00" width="2.569" height="0.60" fill="#ffee33"/>
<rect x="613.53" y="296.71" width="2.569" height="10.39" fill="#44dc55"/>
<rect x="613.53" y="295.71" width="2.569" height="1.00" fill="#52f548"/>
<rect x="613.53" y="295.11" width="2.569" height="0.60" fill="#ffee33"/>
<rect x="616.10" y="295.30" width="2.569" height="11.80" fill="#44dc55"/>
<rect x="616.10" y="294.30" width="2.569" height="1.00" fill="#52f548"/>
<rect x="616.10" y="293.70" width="2.569" height="0.60" fill="#ffee33"/>
<rect x="618.67" y="306.71" width="2.569" height="0.39" fill="#44dc55"/>
<rect x="618.67" y="305.71" width="2.569" height="1.00" fill="#52f548"/>
<rect x="618.67" y="305.11" width="2.569" height="0.60" fill="#ffee33"/>
<rect x="621.24" y="309.60" width="2.569" height="1.20" fill="#44dc55"/>
<rect x="621.24" y="308.60" width="2.569" height="1.00" fill="#52f548"/>
<rect x="621.24" y="308.00" width="2.569" height="0.60" fill="#ffee33"/>
<rect x="623.81" y="291.62" width="2.569" height="19.18" fill="#44dc55"/>
<rect x="623.81" y="290.62" width="2.569" height="1.00" fill="#52f548"/>
<rect x="623.81" y="290.02" width="2.569" height="0.60" fill="#ffee33"/>
<rect x="626.38" y="283.20" width="2.569" height="27.60" fill="#44dc55"/>
<rect x="626.38" y="282.20" width="2.569" height="1.00" fill="#52f548"/>
<rect x="626.38" y="281.60" width="2.569" height="0.60" fill="#ffee33"/>
<rect x="628.94" y="300.67" width="2.569" height="7.93" fill="#44dc55"/>
<rect x="628.94" y="299.67" width="2.569" height="1.00" fill="#52f548"/>
<rect x="628.94" y="299.07" width="2.569" height="0.60" fill="#ffee33"/>
<rect x="631.51" y="304.00" width="2.569" height="4.60" fill="#44dc55"/>
<rect x="631.51" y="303.00" width="2.569" height="1.00" fill="#52f548"/>
<rect x="631.51" y="302.40" width="2.569" height="0.60" fill="#ffee33"/>
<rect x="634.08" y="280.44" width="2.569" height="26.66" fill="#44dc55"/>
<rect x="634.08" y="279.44" width="2.569" height="1.00" fill="#52f548"/>
<rect x="634.08" y="278.84" width="2.569" height="0.60" fill="#ffee33"/>
<rect x="636.65" y="245.45" width="2.569" height="61.65" fill="#44dc55"/>
<rect x="636.65" y="243.22" width="2.569" height="2.24" fill="#52f548"/>
<rect x="636.65" y="242.62" width="2.569" height="0.60" fill="#ffee33"/>
<rect x="639.22" y="215.33" width="2.569" height="91.77" fill="#44dc55"/>
<rect x="639.22" y="212.00" width="2.569" height="3.33" fill="#52f548"/>
<rect x="639.22" y="211.40" width="2.569" height="0.60" fill="#ffee33"/>
<rect x="641.79" y="277.86" width="2.569" height="29.24" fill="#44dc55"/>
<rect x="641.79" y="276.80" width="2.569" height="1.06" fill="#52f548"/>
<rect x="641.79" y="276.20" width="2.569" height="0.60" fill="#ffee33"/>
<rect x="644.36" y="271.49" width="2.569" height="35.61" fill="#44dc55"/>
<rect x="644.36" y="270.20" width="2.569" height="1.29" fill="#52f548"/>
<rect x="644.36" y="269.60" width="2.569" height="0.60" fill="#ffee33"/>
<rect x="646.93" y="290.40" width="2.569" height="16.70" fill="#44dc55"/>
<rect x="646.93" y="289.40" width="2.569" height="1.00" fill="#52f548"/>
<rect x="646.93" y="288.80" width="2.569" height="0.60" fill="#ffee33"/>
<rect x="649.50" y="301.00" width="2.569" height="6.10" fill="#44dc55"/>
<rect x="649.50" y="300.00" width="2.569" height="1.00" fill="#52f548"/>
<rect x="649.50" y="299.40" width="2.569" height="0.60" fill="#ffee33"/>
<rect x="652.07" y="304.00" width="2.569" height="3.10" fill="#44dc55"/>
<rect x="652.07" y="303.00" width="2.569" height="1.00" fill="#52f548"/>
<rect x="652.07" y="302.40" width="2.569" height="0.60" fill="#ffee33"/>
<rect x="654.63" y="284.71" width="2.569" height="22.39" fill="#44dc55"/>
<rect x="654.63" y="283.71" width="2.569" height="1.00" fill="#52f548"/>
<rect x="654.63" y="283.11" width="2.569" height="0.60" fill="#ffee33"/>
<rect x="657.20" y="258.74" width="2.569" height="68.06" fill="#44dc55"/>
<rect x="657.20" y="256.27" width="2.569" height="2.47" fill="#52f548"/>
<rect x="657.20" y="255.67" width="2.569" height="0.60" fill="#ffee33"/>
<rect x="659.77" y="256.69" width="2.569" height="70.11" fill="#44dc55"/>
<rect x="659.77" y="254.15" width="2.569" height="2.54" fill="#52f548"/>
<rect x="659.77" y="253.55" width="2.569" height="0.60" fill="#ffee33"/>
<rect x="662.34" y="252.35" width="2.569" height="74.45" fill="#44dc55"/>
<rect x="662.34" y="249.65" width="2.569" height="2.70" fill="#52f548"/>
<rect x="662.34" y="249.05" width="2.569" height="0.60" fill="#ffee33"/>
<rect x="664.91" y="232.62" width="2.569" height="94.18" fill="#44dc55"/>
<rect x="664.91" y="229.20" width="2.569" height="3.42" fill="#52f548"/>
<rect x="664.91" y="228.60" width="2.569" height="0.60" fill="#ffee33"/>
<rect x="667.48" y="292.91" width="2.569" height="33.89" fill="#44dc55"/>
<rect x="667.48" y="291.68" width="2.569" height="1.23" fill="#52f548"/>
<rect x="667.48" y="291.08" width="2.569" height="0.60" fill="#ffee33"/>
<rect x="670.05" y="317.30" width="2.569" height="14.40" fill="#44dc55"/>
<rect x="670.05" y="316.30" width="2.569" height="1.00" fill="#52f548"/>
<rect x="670.05" y="315.70" width="2.569" height="0.60" fill="#ffee33"/>
<rect x="672.62" y="296.88" width="2.569" height="34.82" fill="#44dc55"/>
<rect x="672.62" y="295.62" width="2.569" height="1.26" fill="#52f548"/>
<rect x="672.62" y="295.02" width="2.569" height="0.60" fill="#ffee33"/>
<rect x="675.19" y="277.98" width="2.569" height="53.72" fill="#44dc55"/>
<rect x="675.19" y="276.03" width="2.569" height="1.95" fill="#52f548"/>
<rect x="675.19" y="275.43" width="2.569" height="0.60" fill="#ffee33"/>
<rect x="677.76" y="268.11" width="2.569" height="63.59" fill="#44dc55"/>
<rect x="677.76" y="265.80" width="2.569" height="2.31" fill="#52f548"/>
<rect x="677.76" y="265.20" width="2.569" height="0.60" fill="#ffee33"/>
<rect x="680.32" y="304.00" width="2.569" height="23.30" fill="#44dc55"/>
<rect x="680.32" y="303.00" width="2.569" height="1.00" fill="#52f548"/>
<rect x="680.32" y="302.40" width="2.569" height="0.60" fill="#ffee33"/>
<rect x="682.89" y="272.92" width="2.569" height="54.38" fill="#44dc55"/>
<rect x="682.89" y="270.95" width="2.569" height="1.97" fill="#52f548"/>
<rect x="682.89" y="270.35" width="2.569" height="0.60" fill="#ffee33"/>
<rect x="685.46" y="247.40" width="2.569" height="79.90" fill="#44dc55"/>
<rect x="685.46" y="244.50" width="2.569" height="2.90" fill="#52f548"/>
<rect x="685.46" y="243.90" width="2.569" height="0.60" fill="#ffee33"/>
<rect x="688.03" y="286.21" width="2.569" height="41.09" fill="#44dc55"/>
<rect x="688.03" y="284.72" width="2.569" height="1.49" fill="#52f548"/>
<rect x="688.03" y="284.12" width="2.569" height="0.60" fill="#ffee33"/>
<rect x="690.60" y="311.35" width="2.569" height="15.95" fill="#44dc55"/>
<rect x="690.60" y="310.35" width="2.569" height="1.00" fill="#52f548"/>
<rect x="690.60" y="309.75" width="2.569" height="0.60" fill="#ffee33"/>
<rect x="693.17" y="322.80" width="2.569" height="4.50" fill="#44dc55"/>
<rect x="693.17" y="321.80" width="2.569" height="1.00" fill="#52f548"/>
<rect x="693.17" y="321.20" width="2.569" height="0.60" fill="#ffee33"/>
<rect x="695.74" y="320.09" width="2.569" height="7.21" fill="#44dc55"/>
<rect x="695.74" y="319.09" width="2.569" height="1.00" fill="#52f548"/>
<rect x="695.74" y="318.49" width="2.569" height="0.60" fill="#ffee33"/>
<rect x="698.31" y="317.30" width="2.569" height="13.30" fill="#44dc55"/>
<rect x="698.31" y="316.30" width="2.569" height="1.00" fill="#52f548"/>
<rect x="698.31" y="315.70" width="2.569" height="0.60" fill="#ffee33"/>
<rect x="700.88" y="320.60" width="2.569" height="10.00" fill="#44dc55"/>
<rect x="700.88" y="319.60" width="2.569" height="1.00" fill="#52f548"/>
<rect x="700.88" y="319.00" width="2.569" height="0.60" fill="#ffee33"/>
<rect x="703.45" y="311.80" width="2.569" height="18.20" fill="#44dc55"/>
<rect x="703.45" y="310.80" width="2.569" height="1.00" fill="#52f548"/>
<rect x="703.45" y="310.20" width="2.569" height="0.60" fill="#ffee33"/>
<rect x="706.01" y="323.90" width="2.569" height="6.10" fill="#44dc55"/>
<rect x="706.01" y="322.90" width="2.569" height="1.00" fill="#52f548"/>
<rect x="706.01" y="322.30" width="2.569" height="0.60" fill="#ffee33"/>
<rect x="708.58" y="304.21" width="2.569" height="25.79" fill="#44dc55"/>
<rect x="708.58" y="303.21" width="2.569" height="1.00" fill="#52f548"/>
<rect x="708.58" y="302.61" width="2.569" height="0.60" fill="#ffee33"/>
<rect x="711.15" y="286.00" width="2.569" height="44.00" fill="#44dc55"/>
<rect x="711.15" y="284.40" width="2.569" height="1.60" fill="#52f548"/>
<rect x="711.15" y="283.80" width="2.569" height="0.60" fill="#ffee33"/>
<rect x="713.72" y="304.00" width="2.569" height="26.00" fill="#44dc55"/>
<rect x="713.72" y="303.00" width="2.569" height="1.00" fill="#52f548"/>
<rect x="713.72" y="302.40" width="2.569" height="0.60" fill="#ffee33"/>
<rect x="716.29" y="296.60" width="2.569" height="30.20" fill="#44dc55"/>
<rect x="716.29" y="295.51" width="2.569" height="1.10" fill="#52f548"/>
<rect x="716.29" y="294.91" width="2.569" height="0.60" fill="#ffee33"/>
<rect x="718.86" y="295.44" width="2.569" height="31.36" fill="#44dc55"/>
<rect x="718.86" y="294.30" width="2.569" height="1.14" fill="#52f548"/>
<rect x="718.86" y="293.70" width="2.569" height="0.60" fill="#ffee33"/>
<rect x="721.43" y="296.04" width="2.569" height="30.76" fill="#44dc55"/>
<rect x="721.43" y="294.93" width="2.569" height="1.12" fill="#52f548"/>
<rect x="721.43" y="294.33" width="2.569" height="0.60" fill="#ffee33"/>
<rect x="724.00" y="299.98" width="2.569" height="26.82" fill="#44dc55"/>
<rect x="724.00" y="298.98" width="2.569" height="1.00" fill="#52f548"/>
<rect x="724.00" y="298.38" width="2.569" height="0.60" fill="#ffee33"/>
<rect x="726.57" y="308.68" width="2.569" height="18.12" fill="#44dc55"/>
<rect x="726.57" y="307.68" width="2.569" height="1.00" fill="#52f548"/>
<rect x="726.57" y="307.08" width="2.569" height="0.60" fill="#ffee33"/>
<rect x="729.14" y="319.74" width="2.569" height="7.06" fill="#44dc55"/>
<rect x="729.14" y="312.67" width="2.569" height="7.06" fill="#52f548"/>
<rect x="731.70" y="322.85" width="2.569" height="3.95" fill="#44dc55"/>
<rect x="731.70" y="318.90" width="2.569" height="3.95" fill="#52f548"/>
<rect x="734.27" y="320.65" width="2.569" height="6.15" fill="#44dc55"/>
<rect x="734.27" y="314.50" width="2.569" height="6.15" fill="#52f548"/>
<rect x="736.84" y="339.00" width="2.569" height="2.86" fill="#52f548"/>
<rect x="739.41" y="339.00" width="2.569" height="13.80" fill="#44dc55"/>
<rect x="739.41" y="352.80" width="2.569" height="2.00" fill="#52f548"/>
<rect x="741.98" y="319.00" width="2.569" height="7.80" fill="#44dc55"/>
<rect x="741.98" y="311.20" width="2.569" height="7.80" fill="#52f548"/>
<rect x="744.55" y="339.00" width="2.569" height="0.23" fill="#52f548"/>
<rect x="747.12" y="339.00" width="2.569" height="22.14" fill="#44dc55"/>
<rect x="747.12" y="361.14" width="2.569" height="2.46" fill="#52f548"/>
<rect x="749.69" y="339.00" width="2.569" height="3.16" fill="#44dc55"/>
<rect x="749.69" y="342.16" width="2.569" height="2.00" fill="#52f548"/>
<rect x="752.26" y="319.55" width="2.569" height="7.25" fill="#44dc55"/>
<rect x="752.26" y="312.30" width="2.569" height="7.25" fill="#52f548"/>
<rect x="754.83" y="339.00" width="2.569" height="4.15" fill="#52f548"/>
<rect x="757.39" y="339.00" width="2.569" height="63.26" fill="#44dc55"/>
<rect x="757.39" y="402.26" width="2.569" height="7.03" fill="#52f548"/>
<rect x="759.96" y="339.00" width="2.569" height="111.96" fill="#44dc55"/>
<rect x="759.96" y="450.96" width="2.569" height="12.44" fill="#52f548"/>
<rect x="762.53" y="339.00" width="2.569" height="53.96" fill="#44dc55"/>
<rect x="762.53" y="392.96" width="2.569" height="6.00" fill="#52f548"/>
<rect x="765.10" y="339.00" width="2.569" height="25.06" fill="#44dc55"/>
<rect x="765.10" y="364.06" width="2.569" height="2.78" fill="#52f548"/>
<rect x="767.67" y="339.00" width="2.569" height="5.41" fill="#44dc55"/>
<rect x="767.67" y="344.41" width="2.569" height="2.00" fill="#52f548"/>
<rect x="770.24" y="327.90" width="2.569" height="6.40" fill="#44dc55"/>
<rect x="770.24" y="321.50" width="2.569" height="6.40" fill="#52f548"/>
<rect x="770.24" y="339.00" width="2.569" height="1.00" fill="#ff420e"/>
<rect x="770.24" y="340.00" width="2.569" height="2.00" fill="#52f548"/>
<rect x="772.81" y="339.00" width="2.569" height="1.00" fill="#ff420e"/>
<rect x="772.81" y="340.00" width="2.569" height="7.37" fill="#44dc55"/>
<rect x="772.81" y="347.37" width="2.569" height="2.00" fill="#52f548"/>
<rect x="775.38" y="339.00" width="2.569" height="1.00" fill="#ff420e"/>
<rect x="775.38" y="340.00" width="2.569" height="28.53" fill="#44dc55"/>
<rect x="775.38" y="368.53" width="2.569" height="3.17" fill="#52f548"/>
<rect x="777.95" y="339.00" width="2.569" height="1.00" fill="#ff420e"/>
<rect x="777.95" y="340.00" width="2.569" height="0.50" fill="#52f548"/>
<rect x="780.52" y="325.33" width="2.569" height="8.97" fill="#44dc55"/>
<rect x="780.52" y="316.36" width="2.569" height="8.97" fill="#52f548"/>
<rect x="780.52" y="339.00" width="2.569" height="1.00" fill="#ff420e"/>
<rect x="780.52" y="340.00" width="2.569" height="2.00" fill="#52f548"/>
<rect x="783.08" y="321.20" width="2.569" height="9.80" fill="#44dc55"/>
<rect x="783.08" y="311.40" width="2.569" height="9.80" fill="#52f548"/>
<rect x="783.08" y="339.00" width="2.569" height="1.00" fill="#ff420e"/>
<rect x="783.08" y="340.00" width="2.569" height="2.00" fill="#52f548"/>
<rect x="785.65" y="327.50" width="2.569" height="3.50" fill="#44dc55"/>
<rect x="785.65" y="324.00" width="2.569" height="3.50" fill="#52f548"/>
<rect x="785.65" y="339.00" width="2.569" height="1.00" fill="#ff420e"/>
<rect x="785.65" y="340.00" width="2.569" height="2.00" fill="#52f548"/>
<rect x="788.22" y="323.75" width="2.569" height="7.25" fill="#44dc55"/>
<rect x="788.22" y="316.50" width="2.569" height="7.25" fill="#52f548"/>
<rect x="788.22" y="339.00" width="2.569" height="1.00" fill="#ff420e"/>
<rect x="788.22" y="340.00" width="2.569" height="2.00" fill="#52f548"/>
<rect x="790.79" y="319.76" width="2.569" height="11.24" fill="#44dc55"/>
<rect x="790.79" y="308.52" width="2.569" height="11.24" fill="#52f548"/>
<rect x="790.79" y="339.00" width="2.569" height="1.00" fill="#ff420e"/>
<rect x="790.79" y="340.00" width="2.569" height="2.00" fill="#52f548"/>
<rect x="793.36" y="318.50" width="2.569" height="12.50" fill="#44dc55"/>
<rect x="793.36" y="306.00" width="2.569" height="12.50" fill="#52f548"/>
<rect x="793.36" y="339.00" width="2.569" height="1.00" fill="#ff420e"/>
<rect x="793.36" y="340.00" width="2.569" height="2.00" fill="#52f548"/>
<rect x="795.93" y="339.00" width="2.569" height="1.00" fill="#ff420e"/>
<rect x="795.93" y="340.00" width="2.569" height="1.41" fill="#52f548"/>
<rect x="798.50" y="339.00" width="2.569" height="1.00" fill="#ff420e"/>
<rect x="798.50" y="340.00" width="2.569" height="4.70" fill="#44dc55"/>
<rect x="798.50" y="344.70" width="2.569" height="2.00" fill="#52f548"/>
<rect x="801.07" y="339.00" width="2.569" height="1.00" fill="#ff420e"/>
<rect x="801.07" y="340.00" width="2.569" height="6.80" fill="#44dc55"/>
<rect x="801.07" y="346.80" width="2.569" height="2.00" fill="#52f548"/>
<rect x="803.64" y="339.00" width="2.569" height="1.00" fill="#ff420e"/>
<rect x="803.64" y="340.00" width="2.569" height="20.03" fill="#44dc55"/>
<rect x="803.64" y="360.03" width="2.569" height="2.23" fill="#52f548"/>
<rect x="806.21" y="339.00" width="2.569" height="1.00" fill="#ff420e"/>
<rect x="806.21" y="340.00" width="2.569" height="33.21" fill="#44dc55"/>
<rect x="806.21" y="373.21" width="2.569" height="3.69" fill="#52f548"/>
<rect x="808.77" y="329.20" width="2.569" height="6.60" fill="#44dc55"/>
<rect x="808.77" y="322.60" width="2.569" height="6.60" fill="#52f548"/>
<rect x="808.77" y="339.00" width="2.569" height="1.00" fill="#ff420e"/>
<rect x="808.77" y="340.00" width="2.569" height="2.00" fill="#52f548"/>
<rect x="811.34" y="339.00" width="2.569" height="1.00" fill="#ff420e"/>
<rect x="811.34" y="340.00" width="2.569" height="28.95" fill="#44dc55"/>
<rect x="811.34" y="368.95" width="2.569" height="3.22" fill="#52f548"/>
<rect x="813.91" y="339.00" width="2.569" height="1.00" fill="#ff420e"/>
<rect x="813.91" y="340.00" width="2.569" height="37.73" fill="#44dc55"/>
<rect x="813.91" y="377.73" width="2.569" height="4.19" fill="#52f548"/>
<rect x="816.48" y="339.00" width="2.569" height="1.00" fill="#ff420e"/>
<rect x="816.48" y="340.00" width="2.569" height="73.73" fill="#44dc55"/>
<rect x="816.48" y="413.73" width="2.569" height="8.19" fill="#52f548"/>
<rect x="819.05" y="339.00" width="2.569" height="1.00" fill="#ff420e"/>
<rect x="819.05" y="340.00" width="2.569" height="95.22" fill="#44dc55"/>
<rect x="819.05" y="435.22" width="2.569" height="10.58" fill="#52f548"/>
<rect x="821.62" y="339.00" width="2.569" height="1.00" fill="#ff420e"/>
<rect x="821.62" y="340.00" width="2.569" height="41.51" fill="#44dc55"/>
<rect x="821.62" y="381.51" width="2.569" height="4.61" fill="#52f548"/>
<rect x="824.19" y="339.00" width="2.569" height="1.00" fill="#ff420e"/>
<rect x="824.19" y="340.00" width="2.569" height="8.90" fill="#44dc55"/>
<rect x="824.19" y="348.90" width="2.569" height="2.00" fill="#52f548"/>
<rect x="826.76" y="339.00" width="2.569" height="1.00" fill="#ff420e"/>
<rect x="826.76" y="340.00" width="2.569" height="10.84" fill="#44dc55"/>
<rect x="826.76" y="350.84" width="2.569" height="2.00" fill="#52f548"/>
<rect x="829.33" y="339.00" width="2.569" height="1.00" fill="#ff420e"/>
<rect x="829.33" y="340.00" width="2.569" height="39.42" fill="#44dc55"/>
<rect x="829.33" y="379.42" width="2.569" height="4.38" fill="#52f548"/>
<rect x="831.90" y="339.00" width="2.569" height="1.00" fill="#ff420e"/>
<rect x="831.90" y="340.00" width="2.569" height="29.98" fill="#44dc55"/>
<rect x="831.90" y="369.98" width="2.569" height="3.33" fill="#52f548"/>
<rect x="834.46" y="339.00" width="2.569" height="1.00" fill="#ff420e"/>
<rect x="834.46" y="340.00" width="2.569" height="19.71" fill="#44dc55"/>
<rect x="834.46" y="359.71" width="2.569" height="2.19" fill="#52f548"/>
<rect x="837.03" y="339.00" width="2.569" height="1.00" fill="#ff420e"/>
<rect x="837.03" y="340.00" width="2.569" height="44.32" fill="#44dc55"/>
<rect x="837.03" y="384.32" width="2.569" height="4.92" fill="#52f548"/>
<rect x="839.60" y="339.00" width="2.569" height="1.00" fill="#ff420e"/>
<rect x="839.60" y="340.00" width="2.569" height="55.71" fill="#44dc55"/>
<rect x="839.60" y="395.71" width="2.569" height="6.19" fill="#52f548"/>
<rect x="842.17" y="339.00" width="2.569" height="1.00" fill="#ff420e"/>
<rect x="842.17" y="340.00" width="2.569" height="17.70" fill="#44dc55"/>
<rect x="842.17" y="357.70" width="2.569" height="2.00" fill="#52f548"/>
<rect x="844.74" y="339.00" width="2.569" height="1.00" fill="#ff420e"/>
<rect x="844.74" y="340.00" width="2.569" height="31.66" fill="#44dc55"/>
<rect x="844.74" y="371.66" width="2.569" height="3.52" fill="#52f548"/>
<rect x="847.31" y="339.00" width="2.569" height="1.00" fill="#ff420e"/>
<rect x="847.31" y="340.00" width="2.569" height="39.42" fill="#44dc55"/>
<rect x="847.31" y="379.42" width="2.569" height="4.38" fill="#52f548"/>
<rect x="849.88" y="339.00" width="2.569" height="1.00" fill="#ff420e"/>
<rect x="849.88" y="340.00" width="2.569" height="0.89" fill="#52f548"/>
<rect x="852.45" y="317.75" width="2.569" height="18.85" fill="#44dc55"/>
<rect x="852.45" y="298.90" width="2.569" height="18.85" fill="#52f548"/>
<rect x="852.45" y="339.00" width="2.569" height="1.00" fill="#ff420e"/>
<rect x="852.45" y="340.00" width="2.569" height="2.00" fill="#52f548"/>
<rect x="855.02" y="323.83" width="2.569" height="12.77" fill="#44dc55"/>
<rect x="855.02" y="311.06" width="2.569" height="12.77" fill="#52f548"/>
<rect x="855.02" y="339.00" width="2.569" height="1.00" fill="#ff420e"/>
<rect x="855.02" y="340.00" width="2.569" height="2.00" fill="#52f548"/>
<rect x="857.59" y="339.00" width="2.569" height="1.00" fill="#ff420e"/>
<rect x="857.59" y="340.00" width="2.569" height="18.72" fill="#44dc55"/>
<rect x="857.59" y="358.72" width="2.569" height="2.08" fill="#52f548"/>
<rect x="860.15" y="330.70" width="2.569" height="5.90" fill="#44dc55"/>
<rect x="860.15" y="324.80" width="2.569" height="5.90" fill="#52f548"/>
<rect x="860.15" y="339.00" width="2.569" height="1.00" fill="#ff420e"/>
<rect x="860.15" y="340.00" width="2.569" height="2.00" fill="#52f548"/>
<rect x="862.72" y="339.00" width="2.569" height="1.00" fill="#ff420e"/>
<rect x="862.72" y="340.00" width="2.569" height="4.07" fill="#44dc55"/>
<rect x="862.72" y="344.07" width="2.569" height="2.00" fill="#52f548"/>
<rect x="865.29" y="339.00" width="2.569" height="1.00" fill="#ff420e"/>
<rect x="865.29" y="340.00" width="2.569" height="26.55" fill="#44dc55"/>
<rect x="865.29" y="366.55" width="2.569" height="2.95" fill="#52f548"/>
<rect x="867.86" y="339.00" width="2.569" height="1.00" fill="#ff420e"/>
<rect x="867.86" y="340.00" width="2.569" height="22.70" fill="#44dc55"/>
<rect x="867.86" y="362.70" width="2.569" height="2.52" fill="#52f548"/>
<rect x="870.43" y="339.00" width="2.569" height="1.00" fill="#ff420e"/>
<rect x="870.43" y="340.00" width="2.569" height="4.40" fill="#52f548"/>
<rect x="873.00" y="339.00" width="2.569" height="1.00" fill="#ff420e"/>
<rect x="873.00" y="340.00" width="2.569" height="19.71" fill="#44dc55"/>
<rect x="873.00" y="359.71" width="2.569" height="2.19" fill="#52f548"/>
<rect x="875.57" y="330.92" width="2.569" height="5.68" fill="#44dc55"/>
<rect x="875.57" y="325.23" width="2.569" height="5.68" fill="#52f548"/>
<rect x="875.57" y="339.00" width="2.569" height="1.00" fill="#ff420e"/>
<rect x="875.57" y="340.00" width="2.569" height="2.00" fill="#52f548"/>
<rect x="878.14" y="314.41" width="2.569" height="22.19" fill="#44dc55"/>
<rect x="878.14" y="292.22" width="2.569" height="22.19" fill="#52f548"/>
<rect x="878.14" y="339.00" width="2.569" height="1.00" fill="#ff420e"/>
<rect x="878.14" y="340.00" width="2.569" height="2.00" fill="#52f548"/>
<rect x="880.71" y="286.00" width="2.569" height="50.60" fill="#44dc55"/>
<rect x="880.71" y="235.40" width="2.569" height="50.60" fill="#52f548"/>
<rect x="880.71" y="339.00" width="2.569" height="1.00" fill="#ff420e"/>
<rect x="880.71" y="340.00" width="2.569" height="2.00" fill="#52f548"/>
<rect x="883.28" y="314.05" width="2.569" height="22.55" fill="#44dc55"/>
<rect x="883.28" y="291.50" width="2.569" height="22.55" fill="#52f548"/>
<rect x="883.28" y="339.00" width="2.569" height="1.00" fill="#ff420e"/>
<rect x="883.28" y="340.00" width="2.569" height="2.00" fill="#52f548"/>
<rect x="885.84" y="332.33" width="2.569" height="4.27" fill="#44dc55"/>
<rect x="885.84" y="328.06" width="2.569" height="4.27" fill="#52f548"/>
<rect x="885.84" y="339.00" width="2.569" height="1.00" fill="#ff420e"/>
<rect x="885.84" y="340.00" width="2.569" height="2.00" fill="#52f548"/>
<rect x="888.41" y="339.00" width="2.569" height="1.00" fill="#ff420e"/>
<rect x="888.41" y="340.00" width="2.569" height="6.70" fill="#44dc55"/>
<rect x="888.41" y="346.70" width="2.569" height="2.00" fill="#52f548"/>
<rect x="890.98" y="339.00" width="2.569" height="1.00" fill="#ff420e"/>
<rect x="890.98" y="340.00" width="2.569" height="5.78" fill="#44dc55"/>
<rect x="890.98" y="345.78" width="2.569" height="2.00" fill="#52f548"/>
<rect x="893.55" y="333.10" width="2.569" height="3.50" fill="#44dc55"/>
<rect x="893.55" y="329.61" width="2.569" height="3.50" fill="#52f548"/>
<rect x="893.55" y="339.00" width="2.569" height="1.00" fill="#ff420e"/>
<rect x="893.55" y="340.00" width="2.569" height="2.00" fill="#52f548"/>
<rect x="896.12" y="311.11" width="2.569" height="25.49" fill="#44dc55"/>
<rect x="896.12" y="285.61" width="2.569" height="25.49" fill="#52f548"/>
<rect x="896.12" y="339.00" width="2.569" height="1.00" fill="#ff420e"/>
<rect x="896.12" y="340.00" width="2.569" height="2.00" fill="#52f548"/>
<rect x="898.69" y="285.45" width="2.569" height="51.15" fill="#44dc55"/>
<rect x="898.69" y="234.30" width="2.569" height="51.15" fill="#52f548"/>
<rect x="898.69" y="339.00" width="2.569" height="1.00" fill="#ff420e"/>
<rect x="898.69" y="340.00" width="2.569" height="2.00" fill="#52f548"/>
<rect x="901.26" y="326.65" width="2.569" height="9.95" fill="#44dc55"/>
<rect x="901.26" y="316.69" width="2.569" height="9.95" fill="#52f548"/>
<rect x="901.26" y="339.00" width="2.569" height="1.00" fill="#ff420e"/>
<rect x="901.26" y="340.00" width="2.569" height="2.00" fill="#52f548"/>
<rect x="903.83" y="339.00" width="2.569" height="1.00" fill="#ff420e"/>
<rect x="903.83" y="340.00" width="2.569" height="2.10" fill="#52f548"/>
<rect x="906.40" y="335.21" width="2.569" height="1.39" fill="#44dc55"/>
<rect x="906.40" y="332.21" width="2.569" height="3.00" fill="#52f548"/>
<rect x="906.40" y="339.00" width="2.569" height="1.00" fill="#ff420e"/>
<rect x="906.40" y="340.00" width="2.569" height="2.00" fill="#52f548"/>
<rect x="908.97" y="330.75" width="2.569" height="5.85" fill="#44dc55"/>
<rect x="908.97" y="324.90" width="2.569" height="5.85" fill="#52f548"/>
<rect x="908.97" y="339.00" width="2.569" height="1.00" fill="#ff420e"/>
<rect x="908.97" y="340.00" width="2.569" height="2.00" fill="#52f548"/>
<rect x="911.53" y="328.50" width="2.569" height="8.10" fill="#44dc55"/>
<rect x="911.53" y="320.40" width="2.569" height="8.10" fill="#52f548"/>
<rect x="911.53" y="339.00" width="2.569" height="1.00" fill="#ff420e"/>
<rect x="911.53" y="340.00" width="2.569" height="2.00" fill="#52f548"/>
<rect x="914.10" y="334.40" width="2.569" height="2.20" fill="#44dc55"/>
<rect x="914.10" y="331.40" width="2.569" height="3.00" fill="#52f548"/>
<rect x="914.10" y="339.00" width="2.569" height="1.00" fill="#ff420e"/>
<rect x="914.10" y="340.00" width="2.569" height="2.00" fill="#52f548"/>
<rect x="916.67" y="331.30" width="2.569" height="5.30" fill="#44dc55"/>
<rect x="916.67" y="326.00" width="2.569" height="5.30" fill="#52f548"/>
<rect x="916.67" y="339.00" width="2.569" height="1.00" fill="#ff420e"/>
<rect x="916.67" y="340.00" width="2.569" height="2.00" fill="#52f548"/>
<rect x="919.24" y="339.00" width="2.569" height="1.00" fill="#ff420e"/>
<rect x="919.24" y="340.00" width="3.069" height="14.64" fill="#44dc55"/>
<rect x="919.24" y="354.64" width="2.569" height="2.00" fill="#52f548"/>
<rect x="921.81" y="339.00" width="2.569" height="1.00" fill="#ff420e"/>
<rect x="921.81" y="340.00" width="3.069" height="21.02" fill="#44dc55"/>
<rect x="921.81" y="361.02" width="2.569" height="2.34" fill="#52f548"/>
<rect x="924.38" y="339.00" width="2.569" height="1.00" fill="#ff420e"/>
<rect x="924.38" y="340.00" width="3.069" height="39.46" fill="#44dc55"/>
<rect x="924.38" y="379.46" width="2.569" height="4.38" fill="#52f548"/>
<rect x="926.95" y="339.00" width="2.569" height="1.00" fill="#ff420e"/>
<rect x="926.95" y="340.00" width="3.069" height="49.05" fill="#44dc55"/>
<rect x="926.95" y="389.05" width="2.569" height="5.45" fill="#52f548"/>
<rect x="929.52" y="339.00" width="2.569" height="1.00" fill="#ff420e"/>
<rect x="929.52" y="340.00" width="3.069" height="31.54" fill="#44dc55"/>
<rect x="929.52" y="371.54" width="2.569" height="3.50" fill="#52f548"/>
<rect x="932.09" y="339.00" width="2.569" height="1.00" fill="#ff420e"/>
<rect x="932.09" y="340.00" width="3.069" height="22.41" fill="#44dc55"/>
<rect x="932.09" y="362.41" width="2.569" height="2.49" fill="#52f548"/>
<rect x="934.66" y="339.00" width="2.569" height="1.00" fill="#ff420e"/>
<rect x="934.66" y="340.00" width="3.069" height="25.48" fill="#44dc55"/>
<rect x="934.66" y="365.48" width="2.569" height="2.83" fill="#52f548"/>
<rect x="937.22" y="339.00" width="2.569" height="1.00" fill="#ff420e"/>
<rect x="937.22" y="340.00" width="3.069" height="29.48" fill="#44dc55"/>
<rect x="937.22" y="369.48" width="2.569" height="3.28" fill="#52f548"/>
<rect x="939.79" y="339.00" width="2.569" height="1.00" fill="#ff420e"/>
<rect x="939.79" y="340.00" width="3.069" height="42.97" fill="#44dc55"/>
<rect x="939.79" y="382.97" width="2.569" height="4.77" fill="#52f548"/>
<rect x="942.36" y="339.00" width="2.569" height="1.00" fill="#ff420e"/>
<rect x="942.36" y="340.00" width="3.069" height="57.06" fill="#44dc55"/>
<rect x="942.36" y="397.06" width="2.569" height="6.34" fill="#52f548"/>
<rect x="944.93" y="339.00" width="2.569" height="1.00" fill="#ff420e"/>
<rect x="944.93" y="340.00" width="3.069" height="64.26" fill="#44dc55"/>
<rect x="944.93" y="404.26" width="2.569" height="7.14" fill="#52f548"/>
<rect x="947.50" y="339.00" width="2.569" height="1.00" fill="#ff420e"/>
<rect x="947.50" y="340.00" width="3.069" height="55.44" fill="#44dc55"/>
<rect x="947.50" y="395.44" width="2.569" height="6.16" fill="#52f548"/>
<rect x="950.07" y="339.00" width="2.569" height="1.00" fill="#ff420e"/>
<rect x="950.07" y="340.00" width="3.069" height="54.29" fill="#44dc55"/>
<rect x="950.07" y="394.29" width="2.569" height="6.03" fill="#52f548"/>
<rect x="952.64" y="339.00" width="2.569" height="1.00" fill="#ff420e"/>
<rect x="952.64" y="340.00" width="3.069" height="45.54" fill="#44dc55"/>
<rect x="952.64" y="385.54" width="2.569" height="5.06" fill="#52f548"/>
<rect x="955.21" y="339.00" width="2.569" height="1.00" fill="#ff420e"/>
<rect x="955.21" y="340.00" width="3.069" height="108.63" fill="#44dc55"/>
<rect x="955.21" y="448.63" width="2.569" height="12.07" fill="#52f548"/>
<rect x="957.78" y="339.00" width="2.569" height="1.00" fill="#ff420e"/>
<rect x="957.78" y="340.00" width="3.069" height="77.48" fill="#44dc55"/>
<rect x="957.78" y="417.48" width="2.569" height="8.61" fill="#52f548"/>
<rect x="960.35" y="339.00" width="2.569" height="1.00" fill="#ff420e"/>
<rect x="960.35" y="340.00" width="3.069" height="74.72" fill="#44dc55"/>
<rect x="960.35" y="414.72" width="2.569" height="8.30" fill="#52f548"/>
<rect x="962.91" y="339.00" width="2.569" height="1.00" fill="#ff420e"/>
<rect x="962.91" y="340.00" width="3.069" height="68.98" fill="#44dc55"/>
<rect x="962.91" y="408.98" width="2.569" height="7.66" fill="#52f548"/>
<rect x="965.48" y="339.00" width="2.569" height="1.00" fill="#ff420e"/>
<rect x="965.48" y="340.00" width="3.069" height="52.82" fill="#44dc55"/>
<rect x="965.48" y="392.82" width="2.569" height="5.87" fill="#52f548"/>
<rect x="968.05" y="339.00" width="2.569" height="1.00" fill="#ff420e"/>
<rect x="968.05" y="340.00" width="3.069" height="44.55" fill="#44dc55"/>
<rect x="968.05" y="384.55" width="2.569" height="4.95" fill="#52f548"/>
<rect x="970.62" y="339.00" width="2.569" height="1.00" fill="#ff420e"/>
<rect x="970.62" y="340.00" width="3.069" height="41.04" fill="#44dc55"/>
<rect x="970.62" y="381.04" width="2.569" height="4.56" fill="#52f548"/>
<rect x="973.19" y="339.00" width="2.569" height="1.00" fill="#ff420e"/>
<rect x="973.19" y="340.00" width="3.069" height="58.77" fill="#44dc55"/>
<rect x="973.19" y="398.77" width="2.569" height="6.53" fill="#52f548"/>
<rect x="975.76" y="339.00" width="2.569" height="1.00" fill="#ff420e"/>
<rect x="975.76" y="340.00" width="3.069" height="47.07" fill="#44dc55"/>
<rect x="975.76" y="387.07" width="2.569" height="5.23" fill="#52f548"/>
<rect x="978.33" y="339.00" width="2.569" height="1.00" fill="#ff420e"/>
<rect x="978.33" y="340.00" width="3.069" height="63.09" fill="#44dc55"/>
<rect x="978.33" y="403.09" width="2.569" height="7.01" fill="#52f548"/>
<rect x="366.70" y="339.00" width="2.600" height="1.00" fill="#ffee33"/>
<rect x="568.50" y="339.00" width="3.300" height="1.00" fill="#52f548"/>
<rect x="598.10" y="339.00" width="2.200" height="1.00" fill="#ffee33"/>
<rect x="617.90" y="339.00" width="5.400" height="1.00" fill="#ffee33"/>
<rect x="628.80" y="339.00" width="2.200" height="1.00" fill="#ffee33"/>
<rect x="636.50" y="339.00" width="5.500" height="1.00" fill="#ffee33"/>
<rect x="656.20" y="339.00" width="4.400" height="1.00" fill="#ffee33"/>
<rect x="667.20" y="339.00" width="8.800" height="1.00" fill="#52f548"/>
<rect x="677.00" y="339.00" width="3.400" height="1.00" fill="#ffee33"/>
<rect x="689.00" y="339.00" width="4.500" height="1.00" fill="#52f548"/>
<rect x="697.90" y="339.00" width="2.100" height="1.00" fill="#ffee33"/>
<rect x="115.14" y="339.00" width="2.569" height="3.00" fill="#52f548"/>
<rect x="115.14" y="342.00" width="2.569" height="1.20" fill="#ffee33"/>
<rect x="117.71" y="339.00" width="2.569" height="1.00" fill="#ffee33"/>
<rect x="122.85" y="339.00" width="3.853" height="1.00" fill="#ffee33"/>
</g>
<path d="M104.38 249.23 L106.95 252.60 L109.52 223.54 L112.09 207.60 L114.66 222.65 L117.23 298.70 L119.80 279.18 L122.37 271.85 L124.94 250.72 L127.51 215.39 L130.07 173.50 L132.64 244.00 L135.21 304.00 L137.78 331.00 L140.35 299.00 L142.92 164.70 L145.49 175.70 L148.06 170.60 L150.63 188.27 L153.20 199.80 L155.76 155.90 L158.33 227.97 L160.90 269.72 L163.47 275.70 L166.04 222.00 L168.61 246.87 L171.18 259.20 L173.75 229.53 L176.32 208.46 L178.89 193.20 L181.45 234.51 L184.02 265.80 L186.59 190.40 L189.16 226.30 L191.73 219.70 L194.30 230.70 L196.87 193.96 L199.44 142.10 L202.01 179.67 L204.58 228.91 L207.14 253.98 L209.71 261.40 L212.28 178.05 L214.85 139.46 L217.42 138.40 L219.99 196.50 L222.56 154.27 L225.13 150.90 L227.70 150.90 L230.27 148.52 L232.83 143.20 L235.40 223.61 L237.97 263.60 L240.54 156.86 L243.11 152.60 L245.68 225.41 L248.25 257.28 L250.82 282.89 L253.39 302.00 L255.96 291.00 L258.52 304.20 L261.09 278.12 L263.66 258.10 L266.23 285.57 L268.80 300.90 L271.37 286.09 L273.94 258.66 L276.51 212.90 L279.08 150.58 L281.65 145.75 L284.21 141.70 L286.78 152.60 L289.35 148.70 L291.92 210.53 L294.49 215.75 L297.06 218.54 L299.63 222.96 L302.20 279.00 L304.77 259.38 L307.34 248.20 L309.90 281.00 L312.47 216.65 L315.04 214.14 L317.61 192.74 L320.18 171.30 L322.75 174.60 L325.32 138.40 L327.89 161.39 L330.46 248.18 L333.03 266.90 L335.59 221.90 L338.16 228.06 L340.73 234.00 L343.30 204.78 L345.87 109.90 L348.44 168.75 L351.01 198.38 L353.58 213.83 L356.15 254.00 L358.72 274.60 L361.28 259.60 L363.85 303.00 L366.42 301.37 L368.99 293.88 L371.56 284.40 L374.13 299.80 L376.70 297.08 L379.27 295.40 L381.84 296.10 L384.41 296.50 L386.97 252.00 L389.54 294.82 L392.11 296.50 L394.68 274.99 L397.25 264.70 L399.82 284.40 L402.39 255.22 L404.96 211.40 L407.53 251.91 L410.10 296.50 L412.66 291.00 L415.23 296.50 L417.80 188.07 L420.37 136.20 L422.94 217.33 L425.51 268.75 L428.08 286.60 L430.65 187.70 L433.22 190.00 L435.79 187.70 L438.35 258.07 L440.92 275.55 L443.49 289.78 L446.06 297.48 L448.63 305.19 L451.20 313.00 L453.77 303.25 L456.34 295.40 L458.91 271.80 L461.48 198.66 L464.04 161.40 L466.61 201.67 L469.18 226.81 L471.75 248.20 L474.32 246.19 L476.89 245.00 L479.46 283.06 L482.03 299.02 L484.60 300.90 L487.17 277.88 L489.73 257.70 L492.30 238.17 L494.87 223.00 L497.44 255.45 L500.01 284.74 L502.58 289.27 L505.15 305.30 L507.72 271.61 L510.29 269.39 L512.86 256.02 L515.42 225.82 L517.99 206.50 L520.56 264.70 L523.13 257.38 L525.70 247.10 L528.27 274.60 L530.84 243.90 L533.41 288.80 L535.98 239.50 L538.55 265.80 L541.11 259.88 L543.68 252.00 L546.25 271.85 L548.82 294.30 L551.39 270.25 L553.96 261.40 L556.53 292.00 L559.10 272.40 L561.67 283.30 L564.24 274.33 L566.80 270.20 L569.37 286.17 L571.94 300.90 L574.51 274.60 L577.08 275.70 L579.65 249.16 L582.22 239.90 L584.79 254.77 L587.36 290.92 L589.93 303.00 L592.49 302.11 L595.06 301.30 L597.63 302.00 L600.20 259.53 L602.77 239.00 L605.34 248.54 L607.91 271.58 L610.48 292.47 L613.05 297.60 L615.62 295.71 L618.18 294.30 L620.75 305.71 L623.32 308.60 L625.89 290.62 L628.46 282.20 L631.03 299.67 L633.60 303.00 L636.17 279.44 L638.74 243.22 L641.31 212.00 L643.87 276.80 L646.44 270.20 L649.01 289.40 L651.58 300.00 L654.15 303.00 L656.72 283.71 L659.29 256.27 L661.86 254.15 L664.43 249.65 L667.00 229.20 L669.56 291.68 L672.13 316.30 L674.70 295.62 L677.27 276.03 L679.84 265.80 L682.41 303.00 L684.98 270.95 L687.55 244.50 L690.12 284.72 L692.69 310.35 L695.25 321.80 L697.82 319.09 L700.39 316.30 L702.96 319.60 L705.53 310.80 L708.10 322.90 L710.67 303.21 L713.24 284.40 L715.81 303.00 L718.38 295.51 L720.94 294.30 L723.51 294.93 L726.08 298.98 L728.65 307.68 L731.22 316.67 L733.79 322.90 L736.36 318.50 L738.93 329.66 L741.50 342.60 L744.07 315.20 L746.63 327.03 L749.20 351.40 L751.77 331.96 L754.34 316.30 L756.91 330.95 L759.48 397.09 L762.05 452.10 L764.62 387.65 L767.19 355.55 L769.76 335.11 L772.32 325.50 L774.89 344.67 L777.46 367.00 L780.03 335.54 L782.60 320.36 L785.17 315.40 L787.74 328.00 L790.31 320.50 L792.88 312.52 L795.45 310.00 L798.01 336.71 L800.58 342.00 L803.15 339.70 L805.72 359.05 L808.29 373.70 L810.86 326.60 L813.43 369.76 L816.00 379.52 L818.57 419.52 L821.14 443.40 L823.70 383.72 L826.27 348.50 L828.84 350.44 L831.41 381.40 L833.98 370.91 L836.55 359.50 L839.12 386.85 L841.69 399.50 L844.26 357.30 L846.83 372.78 L849.39 381.40 L851.96 338.49 L854.53 302.90 L857.10 315.06 L859.67 358.40 L862.24 328.80 L864.81 343.67 L867.38 367.10 L869.95 362.82 L872.52 342.00 L875.08 359.50 L877.65 329.23 L880.22 292.22 L882.79 235.40 L885.36 291.50 L887.93 332.06 L890.50 346.30 L893.07 345.38 L895.64 333.61 L898.21 285.61 L900.77 234.30 L903.34 320.69 L905.91 339.70 L908.48 336.21 L911.05 328.90 L913.62 324.40 L916.19 335.40 L918.76 330.00 L921.33 350.14 L923.90 356.85 L926.46 377.35 L929.03 388.00 L931.60 368.55 L934.17 358.40 L936.74 360.72 L939.31 365.15 L941.88 381.24 L944.45 396.90 L947.02 406.60 L949.59 396.80 L952.15 395.53 L954.72 385.80 L957.29 455.90 L959.86 420.69 L962.43 415.92 L965.00 409.54 L967.57 394.49 L970.14 385.30 L972.71 381.40 L975.28 401.10 L977.84 385.80 L980.41 403.60" fill="none" stroke="#83caff" stroke-width="2.7" stroke-linejoin="round" stroke-linecap="butt"/>
<rect x="695.5" y="70.5" width="259" height="132" rx="0.8" fill="#fff" stroke="#b3b3b3" stroke-width="1"/>
<rect x="737" y="80.50" width="26" height="7" fill="#ffee33"/>
<rect x="737" y="101.15" width="26" height="7" fill="#52f548"/>
<rect x="737" y="121.80" width="26" height="7" fill="#44dc55"/>
<rect x="737" y="142.45" width="26" height="7" fill="#ff420e"/>
<rect x="737" y="163.10" width="26" height="7" fill="#004586"/>
<path d="M737 187.25H763" stroke="#83caff" stroke-width="3"/>
<g font-family="Liberation Sans, sans-serif" font-size="11px" fill="#000">
<text x="766.3" y="88.00" textLength="43.7" lengthAdjust="spacing">Solar PV</text>
<text x="766.3" y="108.65" textLength="69.9" lengthAdjust="spacing">Onshore Wind</text>
<text x="766.3" y="129.30" textLength="70.6" lengthAdjust="spacing">Offshore Wind</text>
<text x="766.3" y="149.95" textLength="144.8" lengthAdjust="spacing">Energy from Waste with CHP</text>
<text x="766.3" y="170.60" textLength="102.6" lengthAdjust="spacing">Biomass Conversion</text>
<text x="766.3" y="191.25" textLength="44.9" lengthAdjust="spacing">Net Total</text>
<text x="17.54" y="60.30" textLength="77.16" lengthAdjust="spacing" fill="#000">£15,000,000.00</text>
<text x="17.54" y="108.30" textLength="77.16" lengthAdjust="spacing" fill="#000">£12,500,000.00</text>
<text x="17.54" y="155.30" textLength="77.16" lengthAdjust="spacing" fill="#000">£10,000,000.00</text>
<text x="23.66" y="202.30" textLength="71.04" lengthAdjust="spacing" fill="#000">£7,500,000.00</text>
<text x="23.66" y="249.30" textLength="71.04" lengthAdjust="spacing" fill="#000">£5,000,000.00</text>
<text x="23.66" y="296.30" textLength="71.04" lengthAdjust="spacing" fill="#000">£2,500,000.00</text>
<text x="66.54" y="343.30" textLength="28.16" lengthAdjust="spacing" fill="#000">£0.00</text>
<text x="20.61" y="391.30" textLength="74.69" lengthAdjust="spacing" fill="#ff0000">-£2,500,000.00</text>
<text x="20.61" y="438.30" textLength="74.69" lengthAdjust="spacing" fill="#ff0000">-£5,000,000.00</text>
<text x="20.61" y="485.30" textLength="74.69" lengthAdjust="spacing" fill="#ff0000">-£7,500,000.00</text>
<text x="103.30" y="358" text-anchor="middle">01/01/21</text>
<text x="182.94" y="358" text-anchor="middle">01/02/21</text>
<text x="254.87" y="358" text-anchor="middle">01/03/21</text>
<text x="334.51" y="358" text-anchor="middle">01/04/21</text>
<text x="411.58" y="358" text-anchor="middle">01/05/21</text>
<text x="491.22" y="358" text-anchor="middle">01/06/21</text>
<text x="568.29" y="358" text-anchor="middle">01/07/21</text>
<text x="647.93" y="358" text-anchor="middle">01/08/21</text>
<text x="727.57" y="358" text-anchor="middle">01/09/21</text>
<text x="804.64" y="358" text-anchor="middle">01/10/21</text>
<text x="884.28" y="358" text-anchor="middle">01/11/21</text>
<text x="961.35" y="358" text-anchor="middle">01/12/21</text>
</g>
<text x="325.0" y="32" textLength="356" lengthAdjust="spacing" font-family="Liberation Sans, sans-serif" font-size="14.1px" fill="#000">Daily CFD Generator Payments - EMR Settlement Data</text>
</svg>
</body></html>
